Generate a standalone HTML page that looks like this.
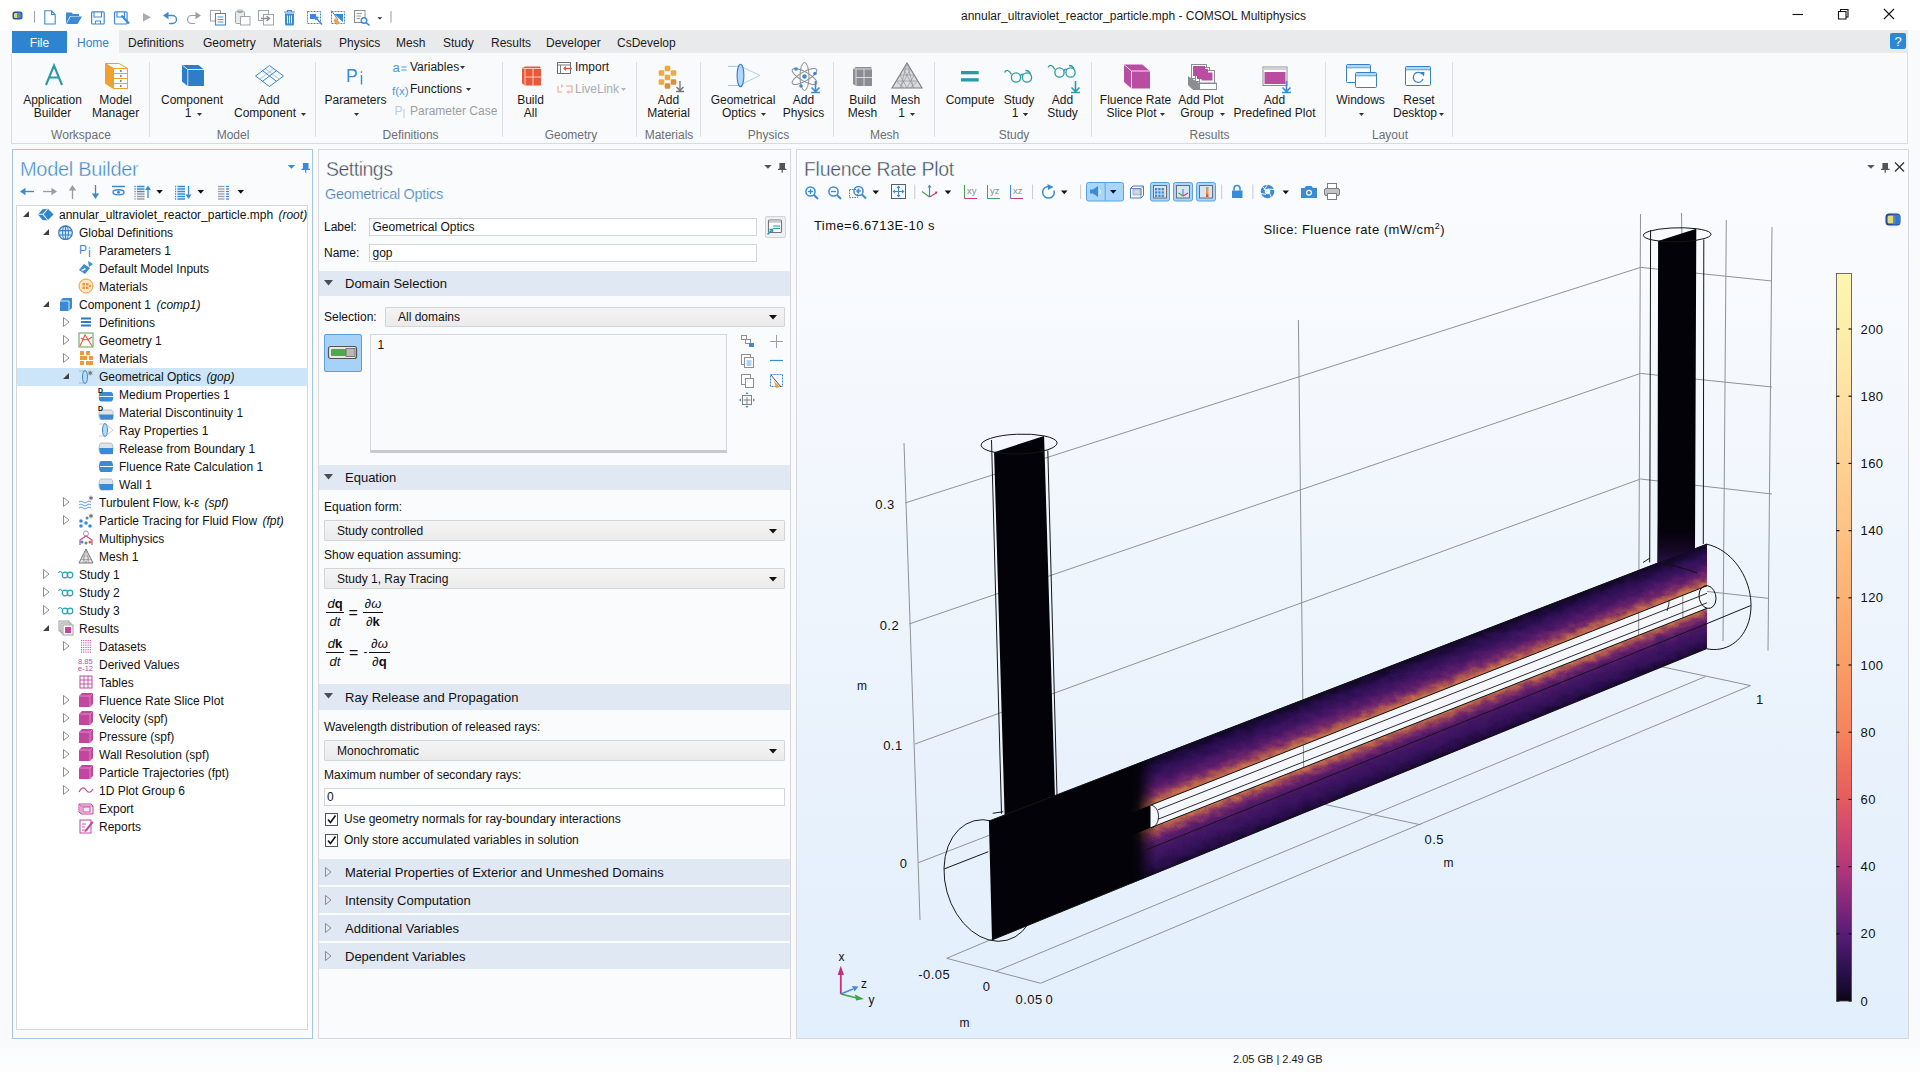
<!DOCTYPE html>
<html><head><meta charset="utf-8"><title>COMSOL</title>
<style>
html,body{margin:0;padding:0;}
body{width:1920px;height:1080px;overflow:hidden;position:relative;font-family:'Liberation Sans', sans-serif;background:#f9fafb;}
.t{position:absolute;white-space:nowrap;}
svg{display:block}
</style></head><body>
<div style="position:absolute;left:0px;top:0px;width:1920px;height:30px;background:#ffffff"></div><div style="position:absolute;left:0px;top:30px;width:1920px;height:1050px;background:linear-gradient(#f9fafc 0px,#f9fafc 1010px,#ffffff 1050px)"></div><div style="position:absolute;left:119px;top:30px;width:1789px;height:24px;background:#e9eaec"></div><div style="position:absolute;left:12px;top:31px;width:55px;height:22px;background:#2e84d1"></div><div class="t " style="left:-460.5px;width:1000px;text-align:center;top:36.8px;font-size:12px;line-height:12px;color:#ffffff;">File</div><div class="t " style="left:-407.0px;width:1000px;text-align:center;top:36.8px;font-size:12px;line-height:12px;color:#3a7fc0;">Home</div><div class="t " style="left:128.0px;top:36.8px;font-size:12px;line-height:12px;color:#1a1a1a;">Definitions</div><div class="t " style="left:203.0px;top:36.8px;font-size:12px;line-height:12px;color:#1a1a1a;">Geometry</div><div class="t " style="left:273.0px;top:36.8px;font-size:12px;line-height:12px;color:#1a1a1a;">Materials</div><div class="t " style="left:339.0px;top:36.8px;font-size:12px;line-height:12px;color:#1a1a1a;">Physics</div><div class="t " style="left:396.0px;top:36.8px;font-size:12px;line-height:12px;color:#1a1a1a;">Mesh</div><div class="t " style="left:443.0px;top:36.8px;font-size:12px;line-height:12px;color:#1a1a1a;">Study</div><div class="t " style="left:491.0px;top:36.8px;font-size:12px;line-height:12px;color:#1a1a1a;">Results</div><div class="t " style="left:546.0px;top:36.8px;font-size:12px;line-height:12px;color:#1a1a1a;">Developer</div><div class="t " style="left:617.0px;top:36.8px;font-size:12px;line-height:12px;color:#1a1a1a;">CsDevelop</div><div style="position:absolute;left:1890px;top:33px;width:16px;height:16px;background:#2d88d4;border-radius:2px"></div><div class="t " style="left:1398.0px;width:1000px;text-align:center;top:35.0px;font-size:13px;line-height:13px;color:#ffffff;">?</div><div class="t " style="left:961.0px;top:9.8px;font-size:12px;line-height:12px;color:#1a1a1a;">annular_ultraviolet_reactor_particle.mph - COMSOL Multiphysics</div><div style="position:absolute;left:11px;top:53px;width:1897px;height:91px;background:#f9fafc;border:1px solid #d9dbde;border-top:none;box-sizing:border-box"></div><div style="position:absolute;left:149px;top:62px;width:1px;height:75px;background:#dcdee1"></div><div style="position:absolute;left:315px;top:62px;width:1px;height:75px;background:#dcdee1"></div><div style="position:absolute;left:502px;top:62px;width:1px;height:75px;background:#dcdee1"></div><div style="position:absolute;left:636px;top:62px;width:1px;height:75px;background:#dcdee1"></div><div style="position:absolute;left:700px;top:62px;width:1px;height:75px;background:#dcdee1"></div><div style="position:absolute;left:833px;top:62px;width:1px;height:75px;background:#dcdee1"></div><div style="position:absolute;left:934px;top:62px;width:1px;height:75px;background:#dcdee1"></div><div style="position:absolute;left:1091px;top:62px;width:1px;height:75px;background:#dcdee1"></div><div style="position:absolute;left:1325px;top:62px;width:1px;height:75px;background:#dcdee1"></div><div style="position:absolute;left:1452px;top:62px;width:1px;height:75px;background:#dcdee1"></div><div class="t " style="left:-447.5px;width:1000px;text-align:center;top:94.3px;font-size:12px;line-height:12px;color:#1a1a1a;">Application</div><div class="t " style="left:-447.5px;width:1000px;text-align:center;top:106.5px;font-size:12px;line-height:12px;color:#1a1a1a;">Builder</div><div class="t " style="left:-384.4px;width:1000px;text-align:center;top:94.3px;font-size:12px;line-height:12px;color:#1a1a1a;">Model</div><div class="t " style="left:-384.4px;width:1000px;text-align:center;top:106.5px;font-size:12px;line-height:12px;color:#1a1a1a;">Manager</div><div class="t " style="left:-308.0px;width:1000px;text-align:center;top:94.3px;font-size:12px;line-height:12px;color:#1a1a1a;">Component</div><div class="t " style="left:-312.0px;width:1000px;text-align:center;top:106.5px;font-size:12px;line-height:12px;color:#1a1a1a;">1</div><div class="t " style="left:-231.0px;width:1000px;text-align:center;top:94.3px;font-size:12px;line-height:12px;color:#1a1a1a;">Add</div><div class="t " style="left:-235.0px;width:1000px;text-align:center;top:106.5px;font-size:12px;line-height:12px;color:#1a1a1a;">Component</div><div class="t " style="left:30.5px;width:1000px;text-align:center;top:94.3px;font-size:12px;line-height:12px;color:#1a1a1a;">Build</div><div class="t " style="left:30.5px;width:1000px;text-align:center;top:106.5px;font-size:12px;line-height:12px;color:#1a1a1a;">All</div><div class="t " style="left:168.5px;width:1000px;text-align:center;top:94.3px;font-size:12px;line-height:12px;color:#1a1a1a;">Add</div><div class="t " style="left:168.5px;width:1000px;text-align:center;top:106.5px;font-size:12px;line-height:12px;color:#1a1a1a;">Material</div><div class="t " style="left:243.0px;width:1000px;text-align:center;top:94.3px;font-size:12px;line-height:12px;color:#1a1a1a;">Geometrical</div><div class="t " style="left:239.0px;width:1000px;text-align:center;top:106.5px;font-size:12px;line-height:12px;color:#1a1a1a;">Optics</div><div class="t " style="left:303.5px;width:1000px;text-align:center;top:94.3px;font-size:12px;line-height:12px;color:#1a1a1a;">Add</div><div class="t " style="left:303.5px;width:1000px;text-align:center;top:106.5px;font-size:12px;line-height:12px;color:#1a1a1a;">Physics</div><div class="t " style="left:362.5px;width:1000px;text-align:center;top:94.3px;font-size:12px;line-height:12px;color:#1a1a1a;">Build</div><div class="t " style="left:362.5px;width:1000px;text-align:center;top:106.5px;font-size:12px;line-height:12px;color:#1a1a1a;">Mesh</div><div class="t " style="left:405.5px;width:1000px;text-align:center;top:94.3px;font-size:12px;line-height:12px;color:#1a1a1a;">Mesh</div><div class="t " style="left:401.5px;width:1000px;text-align:center;top:106.5px;font-size:12px;line-height:12px;color:#1a1a1a;">1</div><div class="t " style="left:519.0px;width:1000px;text-align:center;top:94.3px;font-size:12px;line-height:12px;color:#1a1a1a;">Study</div><div class="t " style="left:515.0px;width:1000px;text-align:center;top:106.5px;font-size:12px;line-height:12px;color:#1a1a1a;">1</div><div class="t " style="left:562.5px;width:1000px;text-align:center;top:94.3px;font-size:12px;line-height:12px;color:#1a1a1a;">Add</div><div class="t " style="left:562.5px;width:1000px;text-align:center;top:106.5px;font-size:12px;line-height:12px;color:#1a1a1a;">Study</div><div class="t " style="left:635.5px;width:1000px;text-align:center;top:94.3px;font-size:12px;line-height:12px;color:#1a1a1a;">Fluence Rate</div><div class="t " style="left:631.5px;width:1000px;text-align:center;top:106.5px;font-size:12px;line-height:12px;color:#1a1a1a;">Slice Plot</div><div class="t " style="left:701.0px;width:1000px;text-align:center;top:94.3px;font-size:12px;line-height:12px;color:#1a1a1a;">Add Plot</div><div class="t " style="left:697.0px;width:1000px;text-align:center;top:106.5px;font-size:12px;line-height:12px;color:#1a1a1a;">Group</div><div class="t " style="left:774.5px;width:1000px;text-align:center;top:94.3px;font-size:12px;line-height:12px;color:#1a1a1a;">Add</div><div class="t " style="left:774.5px;width:1000px;text-align:center;top:106.5px;font-size:12px;line-height:12px;color:#1a1a1a;">Predefined Plot</div><div class="t " style="left:919.0px;width:1000px;text-align:center;top:94.3px;font-size:12px;line-height:12px;color:#1a1a1a;">Reset</div><div class="t " style="left:915.0px;width:1000px;text-align:center;top:106.5px;font-size:12px;line-height:12px;color:#1a1a1a;">Desktop</div><div class="t " style="left:-144.5px;width:1000px;text-align:center;top:94.3px;font-size:12px;line-height:12px;color:#1a1a1a;">Parameters</div><div class="t " style="left:470.0px;width:1000px;text-align:center;top:94.3px;font-size:12px;line-height:12px;color:#1a1a1a;">Compute</div><div class="t " style="left:860.5px;width:1000px;text-align:center;top:94.3px;font-size:12px;line-height:12px;color:#1a1a1a;">Windows</div><svg style="position:absolute;left:196.5px;top:112.5px" width="5" height="3"><path d="M0 0H5L2.5 3Z" fill="#333"/></svg><svg style="position:absolute;left:301px;top:112.5px" width="5" height="3"><path d="M0 0H5L2.5 3Z" fill="#333"/></svg><svg style="position:absolute;left:761px;top:112.5px" width="5" height="3"><path d="M0 0H5L2.5 3Z" fill="#333"/></svg><svg style="position:absolute;left:909.5px;top:112.5px" width="5" height="3"><path d="M0 0H5L2.5 3Z" fill="#333"/></svg><svg style="position:absolute;left:1023px;top:112.5px" width="5" height="3"><path d="M0 0H5L2.5 3Z" fill="#333"/></svg><svg style="position:absolute;left:1160px;top:112.5px" width="5" height="3"><path d="M0 0H5L2.5 3Z" fill="#333"/></svg><svg style="position:absolute;left:1219.5px;top:112.5px" width="5" height="3"><path d="M0 0H5L2.5 3Z" fill="#333"/></svg><svg style="position:absolute;left:1439px;top:112.5px" width="5" height="3"><path d="M0 0H5L2.5 3Z" fill="#333"/></svg><svg style="position:absolute;left:354px;top:112.5px" width="5" height="3"><path d="M0 0H5L2.5 3Z" fill="#333"/></svg><svg style="position:absolute;left:1359px;top:112.5px" width="5" height="3"><path d="M0 0H5L2.5 3Z" fill="#333"/></svg><svg style="position:absolute;left:1022.5px;top:112.5px" width="5" height="3"><path d="M0 0H5L2.5 3Z" fill="#333"/></svg><div class="t " style="left:-419.0px;width:1000px;text-align:center;top:128.8px;font-size:12px;line-height:12px;color:#6b6f74;">Workspace</div><div class="t " style="left:-267.0px;width:1000px;text-align:center;top:128.8px;font-size:12px;line-height:12px;color:#6b6f74;">Model</div><div class="t " style="left:-89.4px;width:1000px;text-align:center;top:128.8px;font-size:12px;line-height:12px;color:#6b6f74;">Definitions</div><div class="t " style="left:71.0px;width:1000px;text-align:center;top:128.8px;font-size:12px;line-height:12px;color:#6b6f74;">Geometry</div><div class="t " style="left:169.0px;width:1000px;text-align:center;top:128.8px;font-size:12px;line-height:12px;color:#6b6f74;">Materials</div><div class="t " style="left:268.5px;width:1000px;text-align:center;top:128.8px;font-size:12px;line-height:12px;color:#6b6f74;">Physics</div><div class="t " style="left:384.6px;width:1000px;text-align:center;top:128.8px;font-size:12px;line-height:12px;color:#6b6f74;">Mesh</div><div class="t " style="left:514.0px;width:1000px;text-align:center;top:128.8px;font-size:12px;line-height:12px;color:#6b6f74;">Study</div><div class="t " style="left:709.5px;width:1000px;text-align:center;top:128.8px;font-size:12px;line-height:12px;color:#6b6f74;">Results</div><div class="t " style="left:890.0px;width:1000px;text-align:center;top:128.8px;font-size:12px;line-height:12px;color:#6b6f74;">Layout</div><div class="t " style="left:410.0px;top:60.8px;font-size:12px;line-height:12px;color:#1a1a1a;">Variables</div><svg style="position:absolute;left:460px;top:66px" width="5" height="3"><path d="M0 0H5L2.5 3Z" fill="#333"/></svg><div class="t " style="left:410.0px;top:82.8px;font-size:12px;line-height:12px;color:#1a1a1a;">Functions</div><svg style="position:absolute;left:466px;top:88px" width="5" height="3"><path d="M0 0H5L2.5 3Z" fill="#333"/></svg><div class="t " style="left:410.0px;top:104.8px;font-size:12px;line-height:12px;color:#9a9ea3;">Parameter Case</div><div class="t " style="left:575.0px;top:60.8px;font-size:12px;line-height:12px;color:#1a1a1a;">Import</div><div class="t " style="left:575.0px;top:82.8px;font-size:12px;line-height:12px;color:#a8acb0;">LiveLink</div><svg style="position:absolute;left:621px;top:88px" width="5" height="3"><path d="M0 0H5L2.5 3Z" fill="#b0b4b8"/></svg><svg style="position:absolute;left:1786px;top:4px" width="120" height="22" viewBox="1786 4 120 22"><path d="M1792.5 14.5H1803" stroke="#111" stroke-width="1.1"/><path d="M1838.5 11.5h7.5v7.5h-7.5z M1840.5 11.5v-2h7.5v7.5h-2" fill="none" stroke="#111" stroke-width="1.1"/><path d="M1884 9L1894 19M1894 9L1884 19" stroke="#111" stroke-width="1.1"/></svg><svg style="position:absolute;left:0;top:0" width="1460" height="150" viewBox="0 0 1460 150"><rect x="12.5" y="11.5" width="10" height="8" rx="2.5" fill="#1f4fa8"/><rect x="14" y="13" width="6.5" height="5" rx="1.2" fill="#e8d860"/><rect x="17" y="12.5" width="5" height="6" rx="1.5" fill="#3a78d0" opacity="0.8"/><path d="M34.5 11V22.5" stroke="#9a9da2" stroke-width="1"/><path d="M44.8 10.8H51.5L55.2 14.5V24H44.8Z M51.5 10.8V14.5H55.2" fill="none" stroke="#3a8ad6" stroke-width="1.1"/><path d="M66 12.5H71.5L73 14H79V16H70L66 23.8Z" fill="#3a8ad6"/><path d="M70.5 16.5H82L77.5 24H66.5Z" fill="#3a8ad6"/><rect x="91.6" y="11.8" width="12.6" height="12.2" rx="1" fill="none" stroke="#3a8ad6" stroke-width="1.2"/><path d="M94 12V17H101.5V12" fill="none" stroke="#3a8ad6" stroke-width="1.1"/><path d="M95.5 24V21H100.5V24" fill="none" stroke="#3a8ad6" stroke-width="1"/><rect x="114.5" y="11.8" width="12.6" height="12.2" rx="1" fill="none" stroke="#3a8ad6" stroke-width="1.2"/><path d="M117 12V17H124.5V12" fill="none" stroke="#3a8ad6" stroke-width="1.1"/><path d="M121.5 15.5L129 23.5" stroke="#3a8ad6" stroke-width="2.2"/><path d="M143 13L151 17.2L143 21.4Z" fill="#a8abb0"/><path d="M165 15.5H172.5A4 4 0 0 1 172.5 23.5H169" fill="none" stroke="#3a8ad6" stroke-width="1.4"/><path d="M163 15.5L168.5 11.8V19.2Z" fill="#3a8ad6"/><path d="M199 15.5H191.5A4 4 0 0 0 191.5 23.5H195" fill="none" stroke="#9a9da2" stroke-width="1.2"/><path d="M201 15.5L195.5 11.8V19.2Z" fill="#9a9da2"/><rect x="210.5" y="10.5" width="10" height="10.5" fill="#fff" stroke="#a0a3a8" stroke-width="1"/><rect x="215.5" y="13.5" width="10" height="11.5" fill="#fff" stroke="#3a8ad6" stroke-width="1.1"/><path d="M217.5 17H223.5M217.5 19.5H223.5M217.5 22H223.5" stroke="#3a8ad6" stroke-width="0.9"/><rect x="235.5" y="11.5" width="9" height="12" rx="1" fill="#e8e9eb" stroke="#a0a3a8" stroke-width="1"/><rect x="240.5" y="16.5" width="9.5" height="8.5" fill="#fff" stroke="#a0a3a8" stroke-width="1"/><rect x="237.5" y="10" width="5" height="2.5" rx="1" fill="none" stroke="#a0a3a8" stroke-width="1"/><rect x="258.5" y="10.5" width="10" height="10" fill="#fff" stroke="#a0a3a8" stroke-width="1"/><rect x="263.5" y="14.5" width="10" height="10.5" fill="#fff" stroke="#a0a3a8" stroke-width="1"/><path d="M261 18.5H269M266.5 16L269.5 18.5L266.5 21" fill="none" stroke="#8a8d91" stroke-width="1.3"/><path d="M284 12H295M287.5 11.5V10.5H291.5V11.5" fill="none" stroke="#3a8ad6" stroke-width="1.2"/><path d="M285 13.5H294V24A1.5 1.5 0 0 1 292.5 25.5H286.5A1.5 1.5 0 0 1 285 24Z" fill="#3a8ad6"/><path d="M287.5 15.5V23.5M289.5 15.5V23.5M291.5 15.5V23.5" stroke="#fff" stroke-width="0.9"/><rect x="307.5" y="11.5" width="13" height="12" fill="none" stroke="#3a8ad6" stroke-width="1" stroke-dasharray="2 1"/><rect x="310" y="14" width="6" height="5" fill="#3a8ad6"/><path d="M315 17L322 24.5" stroke="#3a8ad6" stroke-width="1.3"/><path d="M314 16L319 17L315.5 20.5Z" fill="#3a8ad6"/><rect x="331.5" y="11.5" width="13" height="12" fill="none" stroke="#3a8ad6" stroke-width="1" stroke-dasharray="2 1"/><path d="M334 14H343V22Z" fill="#3a8ad6"/><path d="M331.5 10.5L338 20" stroke="#7a7d82" stroke-width="1"/><path d="M335 18L340 22.5L337 25L333.5 21Z" fill="#f0a050"/><rect x="354.5" y="10.5" width="10.5" height="12" fill="#fff" stroke="#8a8d91" stroke-width="1"/><path d="M356.5 13.5H362M356.5 16H361M356.5 18.5H360" stroke="#8a8d91" stroke-width="0.9"/><circle cx="364" cy="20.5" r="2.8" fill="#fff" stroke="#3a8ad6" stroke-width="1.4"/><path d="M366 22.5L369.5 25.5" stroke="#3a8ad6" stroke-width="1.6"/><path d="M377.5 17.3H382.2L379.85 19.6Z" fill="#222"/><path d="M391 11V22.5" stroke="#9a9da2" stroke-width="1"/><path d="M46 85L54 65.5L62 85M49 77.5H59" fill="none" stroke="#2a9aa0" stroke-width="2.1"/><path d="M105.5 63.5L113.5 68.5V88.5L105.5 83.5Z" fill="#f0a030" stroke="#f0a030" stroke-width="1"/><path d="M105.5 63.5H119L127.5 68.5H113.5Z" fill="#fff" stroke="#f0a030" stroke-width="1"/><rect x="113.5" y="68.5" width="14" height="20" fill="#fff" stroke="#f0a030" stroke-width="1"/><path d="M113.5 73.5H127.5M113.5 78.5H127.5M113.5 83.5H127.5" stroke="#f0a030" stroke-width="1"/><rect x="120" y="70.2" width="1.6" height="1.6" fill="#666"/><rect x="120" y="75.2" width="1.6" height="1.6" fill="#666"/><rect x="120" y="80.2" width="1.6" height="1.6" fill="#666"/><rect x="120" y="85.2" width="1.6" height="1.6" fill="#666"/><path d="M182 65H198.5L204 69.5V86H187.5L182 81.5Z" fill="#2f7cc8"/><path d="M182.5 65.3L187.8 69.5H204M187.8 69.5V86" fill="none" stroke="#e8f4ff" stroke-width="0.9"/><g fill="none" stroke="#3a8ad6" stroke-width="1"><path d="M269.5 65.5L283.5 76L269.5 86.5L255.5 76Z"/><path d="M262.5 70.7L276.5 81.3M276.5 70.7L262.5 81.3"/><path d="M265 68.5L279 79M274 68.5L260 79" opacity="0.45"/></g><text x="346" y="81.5" font-family="Liberation Sans" font-size="17.5" fill="#3a8ad6">P</text><path d="M361.5 75V84.5" stroke="#3a8ad6" stroke-width="1.4"/><rect x="360.8" y="71.3" width="1.4" height="1.6" fill="#3a8ad6"/><text x="392.5" y="72" font-family="Liberation Sans" font-size="13" fill="#4a98d8">a</text><path d="M401.5 67H406.5M401.5 70H406.5" stroke="#4a98d8" stroke-width="1.2"/><text x="392" y="94.5" font-family="Liberation Sans" font-size="11.5" fill="#4a98d8">f(x)</text><text x="394.5" y="115" font-family="Liberation Sans" font-size="12" fill="#b8cde0">P</text><path d="M404 109V118" stroke="#b8cde0" stroke-width="1"/><path d="M522 68L525 66.5H540L541 68.5V85.5H525L522 83.5Z" fill="#e8583a"/><path d="M525 68.5H541M525 68.5V85.5M533 68.5V85.5M525 77H541M522 68L525 68.5" fill="none" stroke="#ffd8c8" stroke-width="0.9"/><rect x="557.5" y="62.5" width="13" height="11" fill="#fff" stroke="#6a6d72" stroke-width="1"/><path d="M557.5 65H570.5M560.5 65V73.5" stroke="#6a6d72" stroke-width="0.9"/><path d="M564 68.5H572" stroke="#e05a3a" stroke-width="1.4"/><path d="M563 68.5L566 66V71Z" fill="#e05a3a"/><path d="M558 86V92H562M566 86H572V92H568" fill="none" stroke="#f0c0b0" stroke-width="1.6"/><path d="M561 84L564 86L561 88ZM569 90L566 92L569 94Z" fill="#f0c0b0"/><rect x="664.7" y="65.7" width="5.6" height="5.6" rx="1.3" fill="#f0a838"/><rect x="658.7" y="70.2" width="5.6" height="5.6" rx="1.3" fill="#f0a838"/><rect x="670.7" y="70.2" width="5.6" height="5.6" rx="1.3" fill="#f0a838"/><rect x="664.7" y="74.7" width="5.6" height="5.6" rx="1.3" fill="#f0a838"/><rect x="658.7" y="79.2" width="5.6" height="5.6" rx="1.3" fill="#f0a838"/><rect x="670.7" y="79.2" width="5.6" height="5.6" rx="1.3" fill="#d89030"/><rect x="664.7" y="83.2" width="5.6" height="5.6" rx="1.3" fill="#d89030"/><path d="M680 81V90M676.5 87L680 90.5L683.5 87M676 91.5H684" fill="none" stroke="#707378" stroke-width="1.3"/><path d="M728 66.3H740M728 85.5H740" stroke="#9cb8d8" stroke-width="0.9"/><path d="M741 66.5L760 75.5L741 84.5" fill="none" stroke="#a8c8e8" stroke-width="0.9"/><ellipse cx="740.5" cy="75.5" rx="3.4" ry="11.3" fill="#b0d8fa" stroke="#3a78cc" stroke-width="1.1"/><g fill="none" stroke="#8a8d91" stroke-width="1"><ellipse cx="804.5" cy="76.5" rx="4.5" ry="14"/><ellipse cx="804.5" cy="76.5" rx="4.5" ry="14" transform="rotate(60 804.5 76.5)"/><ellipse cx="804.5" cy="76.5" rx="4.5" ry="14" transform="rotate(-60 804.5 76.5)"/></g><circle cx="804.5" cy="76.5" r="2.2" fill="#3a8ad6"/><circle cx="796" cy="69" r="1.8" fill="#3a8ad6"/><circle cx="815" cy="73.5" r="1.8" fill="#3a8ad6"/><circle cx="801" cy="86" r="1.8" fill="#3a8ad6"/><path d="M815.5 81V91M811.5 87.5L815.5 91.5L819.5 87.5M811 92.5H820" fill="none" stroke="#3a8ad6" stroke-width="1.6"/><path d="M853 68.5L856 67H871L872 69V86H856L853 84Z" fill="#8a8d91"/><path d="M856 69H872M856 69V86M864 69V86M856 77.5H872M853 68.5L856 69" fill="none" stroke="#e0e2e5" stroke-width="0.9"/><path d="M907 63L922 88H892Z" fill="#d8dadd" stroke="#7a7d82" stroke-width="1.1"/><g stroke="#8a8d91" stroke-width="0.6" fill="none"><path d="M903.4 69H910.6M899.8 75H914.2M896.2 81H917.8M907 63L900.5 88M907 63L913.5 88M903.4 69L914 88M910.6 69L900 88M899.8 75L907 88M914.2 75L907 88M896.2 81L904 88M917.8 81L910 88"/></g><rect x="961" y="71" width="17.7" height="3.3" fill="#2a9aa8"/><rect x="961" y="78.2" width="17.7" height="3.3" fill="#2a9aa8"/><g fill="none" stroke="#2a9aa8" stroke-width="1.3"><path d="M1004.5 72.5Q1007.5 67.5 1011.5 74.5"/><circle cx="1016.0" cy="77.5" r="4.6"/><circle cx="1027.0" cy="77.5" r="4.6"/><path d="M1020.5 76.0Q1021.5 73.5 1023.5 74.5M1030.5 74.5Q1029.5 70.5 1025.5 70.5"/></g><g fill="none" stroke="#2a9aa8" stroke-width="1.3"><path d="M1048 67.5Q1051 62.5 1055 69.5"/><circle cx="1059.5" cy="72.5" r="4.6"/><circle cx="1070.5" cy="72.5" r="4.6"/><path d="M1064 71.0Q1065 68.5 1067 69.5M1074 69.5Q1073 65.5 1069 65.5"/></g><path d="M1075.5 81V91M1071.5 87.5L1075.5 91.5L1079.5 87.5M1071 92.5H1080" fill="none" stroke="#2a9aa8" stroke-width="1.6"/><path d="M1124 64.5H1142L1150 71V88.5H1131.5L1124 82Z" fill="#b84da2"/><path d="M1124.3 64.8L1131.5 71H1150M1131.5 71V88.5" fill="none" stroke="#fbe0f4" stroke-width="1"/><g fill="#fff" stroke="#8a8d91" stroke-width="1"><rect x="1191.5" y="64.5" width="15" height="14"/><rect x="1195.5" y="67.5" width="14" height="14"/><rect x="1199.5" y="70.5" width="15" height="14"/></g><rect x="1193" y="66" width="12" height="10" fill="#b84da2"/><rect x="1197" y="69" width="11" height="10" fill="#b84da2"/><rect x="1201.5" y="72.5" width="11" height="8" fill="#b84da2"/><path d="M1188.5 76.5V85L1193 89.5H1216.5V83H1199" fill="#8a8d91" stroke="#8a8d91"/><rect x="1199.5" y="83.5" width="17" height="6" fill="#fff" stroke="#8a8d91"/><rect x="1263" y="67" width="24" height="18.5" fill="#fff" stroke="#8a8d91" stroke-width="1"/><rect x="1263.5" y="67.5" width="23" height="2.5" fill="#d0d2d5"/><rect x="1264.5" y="72" width="21" height="12" fill="#b84da2"/><path d="M1286.5 81V91M1282.5 87.5L1286.5 91.5L1290.5 87.5M1282 92.5H1291" fill="none" stroke="#3a8ad6" stroke-width="1.6"/><rect x="1346.5" y="64.5" width="24" height="18" rx="1" fill="#fff" stroke="#3a7ec8" stroke-width="1"/><rect x="1347" y="65" width="23" height="2.5" fill="#a8dcfa"/><path d="M1346.5 67.8H1370.5" stroke="#3a7ec8" stroke-width="0.8"/><rect x="1355.5" y="72.5" width="21" height="15" rx="1" fill="#fff" stroke="#3a7ec8" stroke-width="1"/><rect x="1356" y="73" width="20" height="2.5" fill="#a8dcfa"/><path d="M1355.5 75.8H1376.5" stroke="#3a7ec8" stroke-width="0.8"/><rect x="1405.5" y="66.5" width="25" height="19" rx="1" fill="#fff" stroke="#3a7ec8" stroke-width="1"/><rect x="1406" y="67" width="24" height="2.5" fill="#a8dcfa"/><path d="M1405.5 69.8H1430.5" stroke="#3a7ec8" stroke-width="0.8"/><path d="M1422 74A5 5 0 1 0 1423 79" fill="none" stroke="#3a7ec8" stroke-width="1.2"/><path d="M1420 72L1424.5 72L1424 76.5Z" fill="#3a7ec8"/></svg><div style="position:absolute;left:12px;top:149px;width:301px;height:890px;background:#f9fbfd;border:1px solid #a4c6e2;box-sizing:border-box"></div><div style="position:absolute;left:16px;top:205px;width:292px;height:825px;background:#ffffff;border:1px solid #d6d8db;box-sizing:border-box"></div><div class="t " style="left:20.0px;top:159.1px;font-size:20px;line-height:20px;color:#3d87c9;letter-spacing:-0.3px;-webkit-text-stroke:0.4px #f9fbfd">Model Builder</div><div style="position:absolute;left:318px;top:149px;width:473px;height:890px;background:#fafbfd;border:1px solid #d6d8db;box-sizing:border-box"></div><div class="t " style="left:326.0px;top:159.5px;font-size:19.5px;line-height:19.5px;color:#3b4b5e;letter-spacing:-0.5px;-webkit-text-stroke:0.4px #f9fafc">Settings</div><div style="position:absolute;left:796px;top:149px;width:1113px;height:890px;background:linear-gradient(#f9fbfd 0px,#f9fbfe 60px,#f3f7fd 300px,#e9f2fc 600px,#e2effc 888px);border:1px solid #d6d8db;box-sizing:border-box"></div><div class="t " style="left:804.0px;top:159.5px;font-size:19.5px;line-height:19.5px;color:#3b4b5e;letter-spacing:-0.3px;-webkit-text-stroke:0.4px #f8fafd">Fluence Rate Plot</div><div style="position:absolute;left:17px;top:368px;width:291px;height:18px;background:#cce5f8"></div><svg style="position:absolute;left:23px;top:211px" width="7" height="6"><path d="M6 0V6H0Z" fill="#404040"/></svg><div class="t " style="left:59.0px;top:208.6px;font-size:12px;line-height:12px;color:#111;">annular_ultraviolet_reactor_particle.mph <i style="padding-left:2px">(root)</i></div><svg style="position:absolute;left:37.5px;top:206.0px" width="16" height="16" viewBox="0 0 16 16"><path d="M0 8.4L4.5 3.2L10 2.8L15.5 8.6L9.5 14.6L4.5 14Z" fill="#2f86d0"/><path d="M0.5 8.3H5L9.6 3M5 8.3L10 14.5" fill="none" stroke="#e8f6ff" stroke-width="1.1"/></svg><svg style="position:absolute;left:43px;top:229px" width="7" height="6"><path d="M6 0V6H0Z" fill="#404040"/></svg><div class="t " style="left:79.0px;top:226.6px;font-size:12px;line-height:12px;color:#111;">Global Definitions</div><svg style="position:absolute;left:58.0px;top:224.0px" width="16" height="16" viewBox="0 0 16 16"><circle cx="7.5" cy="8.8" r="6.8" fill="#d4f0fc" stroke="#3a7fc8" stroke-width="1.3"/><ellipse cx="7.5" cy="8.8" rx="3" ry="6.8" fill="none" stroke="#3a7fc8" stroke-width="1.1"/><path d="M1 6.6H14M1 11H14M7.5 2V15.6" stroke="#3a7fc8" stroke-width="1.1"/></svg><div class="t " style="left:99.0px;top:244.6px;font-size:12px;line-height:12px;color:#111;">Parameters 1</div><svg style="position:absolute;left:78.0px;top:242.0px" width="16" height="16" viewBox="0 0 16 16"><text x="1" y="12" font-size="12" fill="#3a8ad6" font-family="Liberation Sans">P</text><path d="M11.5 8V15" stroke="#3aa0c8" stroke-width="1.3"/><circle cx="11.5" cy="6" r="0.8" fill="#3aa0c8"/></svg><div class="t " style="left:99.0px;top:262.6px;font-size:12px;line-height:12px;color:#111;">Default Model Inputs</div><svg style="position:absolute;left:78.0px;top:260.0px" width="16" height="16" viewBox="0 0 16 16"><path d="M6 4L12 8L7 14L1 10Z" fill="#3a8ad6"/><path d="M10 1L15 4L11 7Z" fill="#2a9ab8"/><path d="M3 10L7 8L8 9L5 11Z" fill="#fff"/></svg><div class="t " style="left:99.0px;top:280.6px;font-size:12px;line-height:12px;color:#111;">Materials</div><svg style="position:absolute;left:78.0px;top:278.0px" width="16" height="16" viewBox="0 0 16 16"><circle cx="8" cy="8" r="7" fill="#fde7c8" stroke="#ef9a3a" stroke-width="1"/><rect x="4.5" y="5" width="2.5" height="2.5" fill="#ef9a3a"/><rect x="8" y="5" width="2.5" height="2.5" fill="#ef9a3a"/><rect x="4.5" y="8.5" width="2.5" height="2.5" fill="#ef9a3a"/><rect x="8" y="8.5" width="2.5" height="2.5" fill="#ef9a3a"/><rect x="11" y="7" width="2" height="2" fill="#ef9a3a"/></svg><svg style="position:absolute;left:43px;top:301px" width="7" height="6"><path d="M6 0V6H0Z" fill="#404040"/></svg><div class="t " style="left:79.0px;top:298.6px;font-size:12px;line-height:12px;color:#111;">Component 1 <i style="padding-left:2px">(comp1)</i></div><svg style="position:absolute;left:58.0px;top:296.0px" width="16" height="16" viewBox="0 0 16 16"><path d="M2 5L5 2H14V12L11 15H2Z" fill="#3a8ad6"/><path d="M2 5H11V15" fill="none" stroke="#fff" stroke-width="0.8"/></svg><svg style="position:absolute;left:63px;top:317px" width="7" height="10"><path d="M0.5 0.5L6 5L0.5 9.5Z" fill="none" stroke="#8a8d91" stroke-width="1"/></svg><div class="t " style="left:99.0px;top:316.6px;font-size:12px;line-height:12px;color:#111;">Definitions</div><svg style="position:absolute;left:78.0px;top:314.0px" width="16" height="16" viewBox="0 0 16 16"><path d="M3 4.5H13M3 8H13M3 11.5H13" stroke="#2f78c4" stroke-width="2"/></svg><svg style="position:absolute;left:63px;top:335px" width="7" height="10"><path d="M0.5 0.5L6 5L0.5 9.5Z" fill="none" stroke="#8a8d91" stroke-width="1"/></svg><div class="t " style="left:99.0px;top:334.6px;font-size:12px;line-height:12px;color:#111;">Geometry 1</div><svg style="position:absolute;left:78.0px;top:332.0px" width="16" height="16" viewBox="0 0 16 16"><rect x="1" y="1" width="14" height="14" fill="#fff" stroke="#5aa050" stroke-width="1"/><path d="M2 14L7 3L14 14M3 6Q8 10 14 5" fill="none" stroke="#e05a4a" stroke-width="1.1"/></svg><svg style="position:absolute;left:63px;top:353px" width="7" height="10"><path d="M0.5 0.5L6 5L0.5 9.5Z" fill="none" stroke="#8a8d91" stroke-width="1"/></svg><div class="t " style="left:99.0px;top:352.6px;font-size:12px;line-height:12px;color:#111;">Materials</div><svg style="position:absolute;left:78.0px;top:350.0px" width="16" height="16" viewBox="0 0 16 16"><rect x="2" y="1" width="4" height="4" fill="#ef9a3a"/><rect x="8" y="1" width="4" height="4" fill="#ef9a3a"/><rect x="5" y="6" width="4" height="4" fill="#ef9a3a"/><rect x="11" y="6" width="4" height="4" fill="#ef9a3a"/><rect x="2" y="11" width="4" height="4" fill="#ef9a3a"/><rect x="8" y="11" width="4" height="4" fill="#ef9a3a"/><rect x="11" y="11" width="4" height="4" fill="#ef9a3a"/><rect x="2" y="6" width="4" height="4" fill="#ef9a3a"/></svg><svg style="position:absolute;left:63px;top:373px" width="7" height="6"><path d="M6 0V6H0Z" fill="#404040"/></svg><div class="t " style="left:99.0px;top:370.6px;font-size:12px;line-height:12px;color:#111;">Geometrical Optics <i style="padding-left:2px">(gop)</i></div><svg style="position:absolute;left:78.0px;top:368.0px" width="16" height="16" viewBox="0 0 16 16"><ellipse cx="7" cy="9" rx="2.5" ry="6.5" fill="#bcd9f2" stroke="#3a8ad6" stroke-width="1"/><path d="M1 3H7M1 15H7" stroke="#8aa" stroke-width="0.6"/><path d="M12 2L13 4L15 3L13.5 5L15 7L13 6L12 8L11.5 6L9.5 7L11 5L9.5 3L11.5 4Z" fill="#777"/></svg><div class="t " style="left:119.0px;top:388.6px;font-size:12px;line-height:12px;color:#111;">Medium Properties 1</div><svg style="position:absolute;left:98.0px;top:386.0px" width="16" height="16" viewBox="0 0 16 16"><path d="M3 6H13A2.2 4.8 0 0 1 13 15.6H3A2.2 4.8 0 0 1 3 6Z" fill="#3a8ad6"/><path d="M1.5 10.5H15" stroke="#fff" stroke-width="0.9"/><text x="0" y="6.5" font-size="7" font-weight="bold" fill="#111" font-family="Liberation Sans">D</text></svg><div class="t " style="left:119.0px;top:406.6px;font-size:12px;line-height:12px;color:#111;">Material Discontinuity 1</div><svg style="position:absolute;left:98.0px;top:404.0px" width="16" height="16" viewBox="0 0 16 16"><path d="M3 6H13A2.2 4.8 0 0 1 13 15.6H3A2.2 4.8 0 0 1 3 6Z" fill="#dfe3e8" stroke="#a0a8b0" stroke-width="0.7"/><path d="M1.2 10.5H15.2V15.6H3Q1.2 13.5 1.2 10.5Z" fill="#3a8ad6"/><text x="0" y="6.5" font-size="7" font-weight="bold" fill="#111" font-family="Liberation Sans">D</text></svg><div class="t " style="left:119.0px;top:424.6px;font-size:12px;line-height:12px;color:#111;">Ray Properties 1</div><svg style="position:absolute;left:98.0px;top:422.0px" width="16" height="16" viewBox="0 0 16 16"><ellipse cx="7" cy="8" rx="2.5" ry="6.5" fill="#bcd9f2" stroke="#3a8ad6" stroke-width="1"/><path d="M9 3L15 8L9 13" fill="none" stroke="#9cc" stroke-width="0.8"/><path d="M1 2H7M1 14H7" stroke="#aaa" stroke-width="0.6"/></svg><div class="t " style="left:119.0px;top:442.6px;font-size:12px;line-height:12px;color:#111;">Release from Boundary 1</div><svg style="position:absolute;left:98.0px;top:440.0px" width="16" height="16" viewBox="0 0 16 16"><path d="M3 3H13A2 5.5 0 0 1 13 14H3A2 5.5 0 0 1 3 3Z" fill="#dfe3e8" stroke="#a0a8b0" stroke-width="0.7"/><path d="M1.2 8H15V14H3Q1.2 12 1.2 8Z" fill="#3a8ad6"/></svg><div class="t " style="left:119.0px;top:460.6px;font-size:12px;line-height:12px;color:#111;">Fluence Rate Calculation 1</div><svg style="position:absolute;left:98.0px;top:458.0px" width="16" height="16" viewBox="0 0 16 16"><path d="M3 3H13A2 5.5 0 0 1 13 14H3A2 5.5 0 0 1 3 3Z" fill="#3a8ad6"/><path d="M2 8.5H15" stroke="#fff" stroke-width="1"/></svg><div class="t " style="left:119.0px;top:478.6px;font-size:12px;line-height:12px;color:#111;">Wall 1</div><svg style="position:absolute;left:98.0px;top:476.0px" width="16" height="16" viewBox="0 0 16 16"><path d="M3 3H13A2 5.5 0 0 1 13 14H3A2 5.5 0 0 1 3 3Z" fill="#dfe3e8" stroke="#a0a8b0" stroke-width="0.7"/><path d="M1.2 8H15V14H3Q1.2 12 1.2 8Z" fill="#3a8ad6"/></svg><svg style="position:absolute;left:63px;top:497px" width="7" height="10"><path d="M0.5 0.5L6 5L0.5 9.5Z" fill="none" stroke="#8a8d91" stroke-width="1"/></svg><div class="t " style="left:99.0px;top:496.6px;font-size:12px;line-height:12px;color:#111;">Turbulent Flow, k-ε <i style="padding-left:2px">(spf)</i></div><svg style="position:absolute;left:78.0px;top:494.0px" width="16" height="16" viewBox="0 0 16 16"><path d="M1 8Q3 6 5 8T9 8T13 8M1 11Q3 9 5 11T9 11T13 11M1 14Q3 12 5 14T9 14T13 14" fill="none" stroke="#5a9ad6" stroke-width="1"/><path d="M13 1L13.7 3L15.5 2.5L14.3 4L15.5 5.5L13.7 5L13 7L12.3 5L10.5 5.5L11.7 4L10.5 2.5L12.3 3Z" fill="#777"/></svg><svg style="position:absolute;left:63px;top:515px" width="7" height="10"><path d="M0.5 0.5L6 5L0.5 9.5Z" fill="none" stroke="#8a8d91" stroke-width="1"/></svg><div class="t " style="left:99.0px;top:514.6px;font-size:12px;line-height:12px;color:#111;">Particle Tracing for Fluid Flow <i style="padding-left:2px">(fpt)</i></div><svg style="position:absolute;left:78.0px;top:512.0px" width="16" height="16" viewBox="0 0 16 16"><circle cx="3" cy="9" r="1.8" fill="#3a8ad6"/><circle cx="3" cy="14" r="1.8" fill="#3a8ad6"/><circle cx="8" cy="11" r="1.8" fill="#3a8ad6"/><circle cx="12" cy="14" r="1.8" fill="#3a8ad6"/><circle cx="9" cy="6" r="1.5" fill="#3a8ad6"/><path d="M13 1L13.7 3L15.5 2.5L14.3 4L15.5 5.5L13.7 5L13 7L12.3 5L10.5 5.5L11.7 4L10.5 2.5L12.3 3Z" fill="#777"/></svg><div class="t " style="left:99.0px;top:532.6px;font-size:12px;line-height:12px;color:#111;">Multiphysics</div><svg style="position:absolute;left:78.0px;top:530.0px" width="16" height="16" viewBox="0 0 16 16"><path d="M2 15V10L8 6L14 10V15" fill="none" stroke="#c24a8a" stroke-width="1.2"/><circle cx="4" cy="12" r="1.5" fill="#3a8ad6"/><circle cx="8" cy="13" r="1.5" fill="#4aa050"/><circle cx="12" cy="12" r="1.5" fill="#e05a4a"/><circle cx="8" cy="3.5" r="2.5" fill="none" stroke="#888" stroke-width="0.8"/></svg><div class="t " style="left:99.0px;top:550.6px;font-size:12px;line-height:12px;color:#111;">Mesh 1</div><svg style="position:absolute;left:78.0px;top:548.0px" width="16" height="16" viewBox="0 0 16 16"><path d="M8 1L15 15H1Z" fill="#e8e8e8" stroke="#777" stroke-width="1"/><path d="M4.5 8H11.5M3 11.5H13M8 1L5 15M8 1L11 15M4.5 8L8 15L11.5 8" fill="none" stroke="#888" stroke-width="0.6"/></svg><svg style="position:absolute;left:43px;top:569px" width="7" height="10"><path d="M0.5 0.5L6 5L0.5 9.5Z" fill="none" stroke="#8a8d91" stroke-width="1"/></svg><div class="t " style="left:79.0px;top:568.6px;font-size:12px;line-height:12px;color:#111;">Study 1</div><svg style="position:absolute;left:58.0px;top:566.0px" width="16" height="16" viewBox="0 0 16 16"><path d="M0.5 7Q2 4 4 7" fill="none" stroke="#2aa0b8" stroke-width="1.2"/><circle cx="7" cy="9" r="2.8" fill="none" stroke="#2aa0b8" stroke-width="1.2"/><circle cx="12" cy="9" r="2.8" fill="none" stroke="#2aa0b8" stroke-width="1.2"/></svg><svg style="position:absolute;left:43px;top:587px" width="7" height="10"><path d="M0.5 0.5L6 5L0.5 9.5Z" fill="none" stroke="#8a8d91" stroke-width="1"/></svg><div class="t " style="left:79.0px;top:586.6px;font-size:12px;line-height:12px;color:#111;">Study 2</div><svg style="position:absolute;left:58.0px;top:584.0px" width="16" height="16" viewBox="0 0 16 16"><path d="M0.5 7Q2 4 4 7" fill="none" stroke="#2aa0b8" stroke-width="1.2"/><circle cx="7" cy="9" r="2.8" fill="none" stroke="#2aa0b8" stroke-width="1.2"/><circle cx="12" cy="9" r="2.8" fill="none" stroke="#2aa0b8" stroke-width="1.2"/></svg><svg style="position:absolute;left:43px;top:605px" width="7" height="10"><path d="M0.5 0.5L6 5L0.5 9.5Z" fill="none" stroke="#8a8d91" stroke-width="1"/></svg><div class="t " style="left:79.0px;top:604.6px;font-size:12px;line-height:12px;color:#111;">Study 3</div><svg style="position:absolute;left:58.0px;top:602.0px" width="16" height="16" viewBox="0 0 16 16"><path d="M0.5 7Q2 4 4 7" fill="none" stroke="#2aa0b8" stroke-width="1.2"/><circle cx="7" cy="9" r="2.8" fill="none" stroke="#2aa0b8" stroke-width="1.2"/><circle cx="12" cy="9" r="2.8" fill="none" stroke="#2aa0b8" stroke-width="1.2"/></svg><svg style="position:absolute;left:43px;top:625px" width="7" height="6"><path d="M6 0V6H0Z" fill="#404040"/></svg><div class="t " style="left:79.0px;top:622.6px;font-size:12px;line-height:12px;color:#111;">Results</div><svg style="position:absolute;left:58.0px;top:620.0px" width="16" height="16" viewBox="0 0 16 16"><rect x="1" y="1" width="10" height="10" fill="#f0f0f0" stroke="#888" stroke-width="0.8"/><rect x="3" y="3" width="10" height="10" fill="#f0f0f0" stroke="#888" stroke-width="0.8"/><rect x="5" y="5" width="10" height="10" fill="#fff" stroke="#888" stroke-width="0.8"/><rect x="7" y="7" width="6" height="6" fill="#c2469e"/></svg><svg style="position:absolute;left:63px;top:641px" width="7" height="10"><path d="M0.5 0.5L6 5L0.5 9.5Z" fill="none" stroke="#8a8d91" stroke-width="1"/></svg><div class="t " style="left:99.0px;top:640.6px;font-size:12px;line-height:12px;color:#111;">Datasets</div><svg style="position:absolute;left:78.0px;top:638.0px" width="16" height="16" viewBox="0 0 16 16"><rect x="3.0" y="2.0" width="1.1" height="1.1" fill="#c2469e"/><rect x="5.2" y="2.0" width="1.1" height="1.1" fill="#c2469e"/><rect x="7.4" y="2.0" width="1.1" height="1.1" fill="#c2469e"/><rect x="9.6" y="2.0" width="1.1" height="1.1" fill="#c2469e"/><rect x="11.8" y="2.0" width="1.1" height="1.1" fill="#c2469e"/><rect x="3.0" y="4.3" width="1.1" height="1.1" fill="#c2469e"/><rect x="5.2" y="4.3" width="1.1" height="1.1" fill="#c2469e"/><rect x="7.4" y="4.3" width="1.1" height="1.1" fill="#c2469e"/><rect x="9.6" y="4.3" width="1.1" height="1.1" fill="#c2469e"/><rect x="11.8" y="4.3" width="1.1" height="1.1" fill="#c2469e"/><rect x="3.0" y="6.6" width="1.1" height="1.1" fill="#c2469e"/><rect x="5.2" y="6.6" width="1.1" height="1.1" fill="#c2469e"/><rect x="7.4" y="6.6" width="1.1" height="1.1" fill="#c2469e"/><rect x="9.6" y="6.6" width="1.1" height="1.1" fill="#c2469e"/><rect x="11.8" y="6.6" width="1.1" height="1.1" fill="#c2469e"/><rect x="3.0" y="8.9" width="1.1" height="1.1" fill="#c2469e"/><rect x="5.2" y="8.9" width="1.1" height="1.1" fill="#c2469e"/><rect x="7.4" y="8.9" width="1.1" height="1.1" fill="#c2469e"/><rect x="9.6" y="8.9" width="1.1" height="1.1" fill="#c2469e"/><rect x="11.8" y="8.9" width="1.1" height="1.1" fill="#c2469e"/><rect x="3.0" y="11.2" width="1.1" height="1.1" fill="#c2469e"/><rect x="5.2" y="11.2" width="1.1" height="1.1" fill="#c2469e"/><rect x="7.4" y="11.2" width="1.1" height="1.1" fill="#c2469e"/><rect x="9.6" y="11.2" width="1.1" height="1.1" fill="#c2469e"/><rect x="11.8" y="11.2" width="1.1" height="1.1" fill="#c2469e"/><rect x="3.0" y="13.5" width="1.1" height="1.1" fill="#c2469e"/><rect x="5.2" y="13.5" width="1.1" height="1.1" fill="#c2469e"/><rect x="7.4" y="13.5" width="1.1" height="1.1" fill="#c2469e"/><rect x="9.6" y="13.5" width="1.1" height="1.1" fill="#c2469e"/><rect x="11.8" y="13.5" width="1.1" height="1.1" fill="#c2469e"/></svg><div class="t " style="left:99.0px;top:658.6px;font-size:12px;line-height:12px;color:#111;">Derived Values</div><svg style="position:absolute;left:78.0px;top:656.0px" width="16" height="16" viewBox="0 0 16 16"><text x="0" y="7.5" font-size="7.5" fill="#c2469e" font-family="Liberation Sans">8.85</text><text x="0" y="14.5" font-size="7.5" fill="#c2469e" font-family="Liberation Sans">e-12</text></svg><div class="t " style="left:99.0px;top:676.6px;font-size:12px;line-height:12px;color:#111;">Tables</div><svg style="position:absolute;left:78.0px;top:674.0px" width="16" height="16" viewBox="0 0 16 16"><rect x="2" y="2" width="12" height="12" fill="none" stroke="#c2469e" stroke-width="1"/><path d="M2 6H14M2 10H14M6 2V14M10 2V14" stroke="#c2469e" stroke-width="0.9"/></svg><svg style="position:absolute;left:63px;top:695px" width="7" height="10"><path d="M0.5 0.5L6 5L0.5 9.5Z" fill="none" stroke="#8a8d91" stroke-width="1"/></svg><div class="t " style="left:99.0px;top:694.6px;font-size:12px;line-height:12px;color:#111;">Fluence Rate Slice Plot</div><svg style="position:absolute;left:78.0px;top:692.0px" width="16" height="16" viewBox="0 0 16 16"><path d="M1 4L4 1H15V12L12 15H1Z" fill="#c2469e"/><path d="M1 4H12V15M12 4L15 1" fill="none" stroke="#e8a8d8" stroke-width="0.7"/></svg><svg style="position:absolute;left:63px;top:713px" width="7" height="10"><path d="M0.5 0.5L6 5L0.5 9.5Z" fill="none" stroke="#8a8d91" stroke-width="1"/></svg><div class="t " style="left:99.0px;top:712.6px;font-size:12px;line-height:12px;color:#111;">Velocity (spf)</div><svg style="position:absolute;left:78.0px;top:710.0px" width="16" height="16" viewBox="0 0 16 16"><path d="M1 4L4 1H15V12L12 15H1Z" fill="#c2469e"/><path d="M1 4H12V15M12 4L15 1" fill="none" stroke="#e8a8d8" stroke-width="0.7"/></svg><svg style="position:absolute;left:63px;top:731px" width="7" height="10"><path d="M0.5 0.5L6 5L0.5 9.5Z" fill="none" stroke="#8a8d91" stroke-width="1"/></svg><div class="t " style="left:99.0px;top:730.6px;font-size:12px;line-height:12px;color:#111;">Pressure (spf)</div><svg style="position:absolute;left:78.0px;top:728.0px" width="16" height="16" viewBox="0 0 16 16"><path d="M1 4L4 1H15V12L12 15H1Z" fill="#c2469e"/><path d="M1 4H12V15M12 4L15 1" fill="none" stroke="#e8a8d8" stroke-width="0.7"/></svg><svg style="position:absolute;left:63px;top:749px" width="7" height="10"><path d="M0.5 0.5L6 5L0.5 9.5Z" fill="none" stroke="#8a8d91" stroke-width="1"/></svg><div class="t " style="left:99.0px;top:748.6px;font-size:12px;line-height:12px;color:#111;">Wall Resolution (spf)</div><svg style="position:absolute;left:78.0px;top:746.0px" width="16" height="16" viewBox="0 0 16 16"><path d="M1 4L4 1H15V12L12 15H1Z" fill="#c2469e"/><path d="M1 4H12V15M12 4L15 1" fill="none" stroke="#e8a8d8" stroke-width="0.7"/></svg><svg style="position:absolute;left:63px;top:767px" width="7" height="10"><path d="M0.5 0.5L6 5L0.5 9.5Z" fill="none" stroke="#8a8d91" stroke-width="1"/></svg><div class="t " style="left:99.0px;top:766.6px;font-size:12px;line-height:12px;color:#111;">Particle Trajectories (fpt)</div><svg style="position:absolute;left:78.0px;top:764.0px" width="16" height="16" viewBox="0 0 16 16"><path d="M1 4L4 1H15V12L12 15H1Z" fill="#c2469e"/><path d="M1 4H12V15M12 4L15 1" fill="none" stroke="#e8a8d8" stroke-width="0.7"/></svg><svg style="position:absolute;left:63px;top:785px" width="7" height="10"><path d="M0.5 0.5L6 5L0.5 9.5Z" fill="none" stroke="#8a8d91" stroke-width="1"/></svg><div class="t " style="left:99.0px;top:784.6px;font-size:12px;line-height:12px;color:#111;">1D Plot Group 6</div><svg style="position:absolute;left:78.0px;top:782.0px" width="16" height="16" viewBox="0 0 16 16"><path d="M1 10Q4.5 3 8 8T15 7" fill="none" stroke="#c2469e" stroke-width="1.2"/></svg><div class="t " style="left:99.0px;top:802.6px;font-size:12px;line-height:12px;color:#111;">Export</div><svg style="position:absolute;left:78.0px;top:800.0px" width="16" height="16" viewBox="0 0 16 16"><path d="M1 4H13L15 6V14H3L1 12Z" fill="#f4e8f2" stroke="#c2469e" stroke-width="1"/><rect x="5" y="7" width="7" height="5" fill="none" stroke="#c2469e" stroke-width="0.9"/><path d="M1 4L3 6H15M3 6V14" fill="none" stroke="#c2469e" stroke-width="0.8"/></svg><div class="t " style="left:99.0px;top:820.6px;font-size:12px;line-height:12px;color:#111;">Reports</div><svg style="position:absolute;left:78.0px;top:818.0px" width="16" height="16" viewBox="0 0 16 16"><rect x="2" y="2" width="11" height="13" fill="#fff" stroke="#c2469e" stroke-width="1"/><path d="M4 6H8M4 9H7M4 12H7" stroke="#c2469e" stroke-width="0.9"/><path d="M7 12L14 3L15.5 4.5L8.5 13.5L6.5 14Z" fill="#c2469e"/></svg><div class="t " style="left:325.0px;top:187.2px;font-size:14.5px;line-height:14.5px;color:#4a87ba;letter-spacing:-0.3px;-webkit-text-stroke:0.2px #f9fafc">Geometrical Optics</div><div class="t " style="left:324.0px;top:221.0px;font-size:12px;line-height:12px;color:#111;">Label:</div><div style="position:absolute;left:369px;top:218px;width:388px;height:18px;background:#ffffff;border:1px solid #d4d5d7;box-sizing:border-box"></div><div class="t " style="left:372.5px;top:221.1px;font-size:12px;line-height:12px;color:#111;">Geometrical Optics</div><div style="position:absolute;left:765px;top:216px;width:21px;height:22px;background:#eef0f2;border:1px solid #cfd2d6;box-sizing:border-box;border-radius:2px"></div><svg style="position:absolute;left:765px;top:216px" width="21" height="22"><rect x="3.5" y="4" width="13" height="12.5" rx="1" fill="#fff" stroke="#707378" stroke-width="1.1"/><rect x="4" y="4.5" width="12" height="2.3" fill="#c8cacd"/><path d="M8 10H15M8 12.5H15" stroke="#2a9aa8" stroke-width="1"/><path d="M2.5 18.5L7 14M4.5 13.5H7.5V16.5" fill="none" stroke="#2a9aa8" stroke-width="1.5"/></svg><div class="t " style="left:324.0px;top:247.0px;font-size:12px;line-height:12px;color:#111;">Name:</div><div style="position:absolute;left:369px;top:244px;width:388px;height:18px;background:#ffffff;border:1px solid #d4d5d7;box-sizing:border-box"></div><div class="t " style="left:372.5px;top:247.1px;font-size:12px;line-height:12px;color:#111;">gop</div><div style="position:absolute;left:319px;top:271px;width:471px;height:25px;background:#dfe8f3"></div><svg style="position:absolute;left:324px;top:279.5px" width="9" height="6"><path d="M0 0H9L4.5 5.5Z" fill="#4a4d52"/></svg><div class="t " style="left:345.0px;top:277.1px;font-size:13px;line-height:13px;color:#111;">Domain Selection</div><div class="t " style="left:324.0px;top:311.1px;font-size:12px;line-height:12px;color:#111;">Selection:</div><div style="position:absolute;left:385px;top:307px;width:400px;height:20px;background:linear-gradient(#f4f4f5,#ebebec);border:1px solid #d4d5d7;box-sizing:border-box;border-radius:1px"></div><div class="t " style="left:398.0px;top:311.1px;font-size:12px;line-height:12px;color:#111;">All domains</div><svg style="position:absolute;left:769px;top:315.0px" width="8" height="5"><path d="M0 0H8L4 4.5Z" fill="#111"/></svg><div style="position:absolute;left:324px;top:334px;width:38px;height:38px;background:#a6d2f7;border:1px solid #5aa0dc;box-sizing:border-box;border-radius:2px"></div><svg style="position:absolute;left:327px;top:344px" width="32" height="18"><rect x="1.5" y="2.5" width="28" height="12" rx="2" fill="#e8e8e8" stroke="#555" stroke-width="1.2"/><rect x="4" y="5" width="15" height="7" rx="1" fill="#4caa4c"/><rect x="19" y="4.5" width="9" height="8" fill="#b8b8b8" stroke="#666" stroke-width="0.8"/></svg><div style="position:absolute;left:370px;top:334px;width:357px;height:119px;background:#f9fafc;border:1px solid #d6d8db;border-bottom:3px solid #c8cacd;box-sizing:border-box"></div><div class="t " style="left:377.5px;top:338.8px;font-size:12px;line-height:12px;color:#111;">1</div><svg style="position:absolute;left:738px;top:332px" width="50" height="78"><g fill="none" stroke="#8a9098" stroke-width="1"><rect x="3.5" y="3.5" width="5" height="4"/><rect x="7.5" y="7.5" width="5" height="4"/></g><rect x="11" y="11" width="5" height="4" fill="#3a8ad6"/><path d="M38.5 3V16M32 9.5H45" stroke="#9aa0a6" stroke-width="1"/><g fill="#fff" stroke="#8a9098" stroke-width="1"><rect x="3.5" y="22.5" width="9" height="10"/><rect x="6.5" y="25.5" width="9" height="10"/></g><path d="M8.5 29H13.5M8.5 31H13.5M8.5 33H13.5" stroke="#3a8ad6" stroke-width="0.8"/><path d="M32 28.5H45" stroke="#3a8ad6" stroke-width="1.2"/><g fill="#fff" stroke="#8a9098" stroke-width="1"><rect x="3.5" y="42.5" width="9" height="10"/><rect x="7.5" y="46.5" width="8" height="9"/></g><rect x="32.5" y="42.5" width="12" height="12" fill="none" stroke="#3a8ad6" stroke-dasharray="2 1"/><path d="M33 43L43 55" stroke="#555" stroke-width="1"/><path d="M36 49L42 55L38 56Z" fill="#f0a030"/><rect x="4.5" y="63.5" width="9" height="9" fill="none" stroke="#7a8088" stroke-width="1"/><path d="M9 65V72M5.5 68H12.5" stroke="#7a8088"/><path d="M9 60L10.5 62H7.5ZM9 76L10.5 74H7.5ZM1 68L3 66.5V69.5ZM17 68L15 66.5V69.5Z" fill="#3a8ad6"/></svg><div style="position:absolute;left:319px;top:465px;width:471px;height:25px;background:#dfe8f3"></div><svg style="position:absolute;left:324px;top:473.5px" width="9" height="6"><path d="M0 0H9L4.5 5.5Z" fill="#4a4d52"/></svg><div class="t " style="left:345.0px;top:471.1px;font-size:13px;line-height:13px;color:#111;">Equation</div><div class="t " style="left:324.0px;top:500.8px;font-size:12px;line-height:12px;color:#111;">Equation form:</div><div style="position:absolute;left:324px;top:520px;width:461px;height:21px;background:linear-gradient(#f4f4f5,#ebebec);border:1px solid #d4d5d7;box-sizing:border-box;border-radius:1px"></div><div class="t " style="left:337.0px;top:524.6px;font-size:12px;line-height:12px;color:#111;">Study controlled</div><svg style="position:absolute;left:769px;top:528.5px" width="8" height="5"><path d="M0 0H8L4 4.5Z" fill="#111"/></svg><div class="t " style="left:324.0px;top:549.1px;font-size:12px;line-height:12px;color:#111;">Show equation assuming:</div><div style="position:absolute;left:324px;top:568px;width:461px;height:21px;background:linear-gradient(#f4f4f5,#ebebec);border:1px solid #d4d5d7;box-sizing:border-box;border-radius:1px"></div><div class="t " style="left:337.0px;top:572.6px;font-size:12px;line-height:12px;color:#111;">Study 1, Ray Tracing</div><svg style="position:absolute;left:769px;top:576.5px" width="8" height="5"><path d="M0 0H8L4 4.5Z" fill="#111"/></svg><div class="t" style="left:326px;top:597px;width:18px;text-align:center;font-size:13px;line-height:14px;font-style:italic;color:#111">d<b style="font-style:normal">q</b></div><div style="position:absolute;left:326px;top:612px;width:18px;height:1px;background:#111"></div><div class="t" style="left:326px;top:615px;width:18px;text-align:center;font-size:13px;line-height:14px;font-style:italic;color:#111">dt</div><div class="t " style="left:348.5px;top:605.0px;font-size:16px;line-height:16px;color:#111;">=</div><div class="t" style="left:363px;top:597px;width:20px;text-align:center;font-size:13px;line-height:14px;font-style:italic;color:#111">∂ω</div><div style="position:absolute;left:363px;top:612px;width:20px;height:1px;background:#111"></div><div class="t" style="left:363px;top:615px;width:20px;text-align:center;font-size:13px;line-height:14px;font-style:italic;color:#111">∂<b style="font-style:normal">k</b></div><div class="t" style="left:326px;top:637px;width:18px;text-align:center;font-size:13px;line-height:14px;font-style:italic;color:#111">d<b style="font-style:normal">k</b></div><div style="position:absolute;left:326px;top:652px;width:18px;height:1px;background:#111"></div><div class="t" style="left:326px;top:655px;width:18px;text-align:center;font-size:13px;line-height:14px;font-style:italic;color:#111">dt</div><div class="t " style="left:349.0px;top:645.0px;font-size:16px;line-height:16px;color:#111;">=</div><div class="t " style="left:363.5px;top:645.8px;font-size:12px;line-height:12px;color:#111;">-</div><div class="t" style="left:369px;top:637px;width:21px;text-align:center;font-size:13px;line-height:14px;font-style:italic;color:#111">∂ω</div><div style="position:absolute;left:369px;top:652px;width:21px;height:1px;background:#111"></div><div class="t" style="left:369px;top:655px;width:21px;text-align:center;font-size:13px;line-height:14px;font-style:italic;color:#111">∂<b style="font-style:normal">q</b></div><div style="position:absolute;left:319px;top:684px;width:471px;height:26px;background:#dfe8f3"></div><svg style="position:absolute;left:324px;top:693.0px" width="9" height="6"><path d="M0 0H9L4.5 5.5Z" fill="#4a4d52"/></svg><div class="t " style="left:345.0px;top:690.6px;font-size:13px;line-height:13px;color:#111;">Ray Release and Propagation</div><div class="t " style="left:324.0px;top:721.3px;font-size:12px;line-height:12px;color:#111;">Wavelength distribution of released rays:</div><div style="position:absolute;left:324px;top:740px;width:461px;height:21px;background:linear-gradient(#f4f4f5,#ebebec);border:1px solid #d4d5d7;box-sizing:border-box;border-radius:1px"></div><div class="t " style="left:337.0px;top:744.6px;font-size:12px;line-height:12px;color:#111;">Monochromatic</div><svg style="position:absolute;left:769px;top:748.5px" width="8" height="5"><path d="M0 0H8L4 4.5Z" fill="#111"/></svg><div class="t " style="left:324.0px;top:769.1px;font-size:12px;line-height:12px;color:#111;">Maximum number of secondary rays:</div><div style="position:absolute;left:324px;top:788px;width:461px;height:18px;background:#ffffff;border:1px solid #d4d5d7;box-sizing:border-box"></div><div class="t " style="left:327.0px;top:791.1px;font-size:12px;line-height:12px;color:#111;">0</div><div style="position:absolute;left:325px;top:813px;width:13px;height:13px;background:#fff;border:1px solid #555;box-sizing:border-box"></div><svg style="position:absolute;left:325px;top:813px" width="13" height="13"><path d="M3 6.5L5.5 9.5L10.5 2.5" fill="none" stroke="#111" stroke-width="1.6"/></svg><div class="t " style="left:344.0px;top:813.1px;font-size:12px;line-height:12px;color:#111;">Use geometry normals for ray-boundary interactions</div><div style="position:absolute;left:325px;top:834px;width:13px;height:13px;background:#fff;border:1px solid #555;box-sizing:border-box"></div><svg style="position:absolute;left:325px;top:834px" width="13" height="13"><path d="M3 6.5L5.5 9.5L10.5 2.5" fill="none" stroke="#111" stroke-width="1.6"/></svg><div class="t " style="left:344.0px;top:834.1px;font-size:12px;line-height:12px;color:#111;">Only store accumulated variables in solution</div><div style="position:absolute;left:319px;top:859px;width:471px;height:26px;background:#dfe8f3"></div><svg style="position:absolute;left:325px;top:866.5px" width="7" height="10"><path d="M0.5 0.5L6 5L0.5 9.5Z" fill="none" stroke="#8a8d91" stroke-width="1"/></svg><div class="t " style="left:345.0px;top:865.6px;font-size:13px;line-height:13px;color:#111;">Material Properties of Exterior and Unmeshed Domains</div><div style="position:absolute;left:319px;top:887px;width:471px;height:26px;background:#dfe8f3"></div><svg style="position:absolute;left:325px;top:894.5px" width="7" height="10"><path d="M0.5 0.5L6 5L0.5 9.5Z" fill="none" stroke="#8a8d91" stroke-width="1"/></svg><div class="t " style="left:345.0px;top:893.6px;font-size:13px;line-height:13px;color:#111;">Intensity Computation</div><div style="position:absolute;left:319px;top:915px;width:471px;height:26px;background:#dfe8f3"></div><svg style="position:absolute;left:325px;top:922.5px" width="7" height="10"><path d="M0.5 0.5L6 5L0.5 9.5Z" fill="none" stroke="#8a8d91" stroke-width="1"/></svg><div class="t " style="left:345.0px;top:921.6px;font-size:13px;line-height:13px;color:#111;">Additional Variables</div><div style="position:absolute;left:319px;top:943px;width:471px;height:26px;background:#dfe8f3"></div><svg style="position:absolute;left:325px;top:950.5px" width="7" height="10"><path d="M0.5 0.5L6 5L0.5 9.5Z" fill="none" stroke="#8a8d91" stroke-width="1"/></svg><div class="t " style="left:345.0px;top:949.6px;font-size:13px;line-height:13px;color:#111;">Dependent Variables</div><svg style="position:absolute;left:797px;top:150px" width="1110" height="887" viewBox="797 150 1110 887"><line x1="904" y1="443" x2="920" y2="920" stroke="#8f9296" stroke-width="1"/><line x1="1298.4" y1="320" x2="1304" y2="800" stroke="#8f9296" stroke-width="1"/><line x1="1640.5" y1="214" x2="1638.5" y2="663" stroke="#8f9296" stroke-width="1"/><line x1="905" y1="503" x2="1640.5" y2="267.4" stroke="#8f9296" stroke-width="1"/><line x1="909" y1="624" x2="1640.5" y2="373.4" stroke="#8f9296" stroke-width="1"/><line x1="915" y1="744" x2="1640.5" y2="479" stroke="#8f9296" stroke-width="1"/><line x1="918.3" y1="862.7" x2="1640.5" y2="584" stroke="#8f9296" stroke-width="1"/><line x1="1681.5" y1="213" x2="1683" y2="300" stroke="#8f9296" stroke-width="1"/><line x1="1726.3" y1="220" x2="1723" y2="641" stroke="#8f9296" stroke-width="1"/><line x1="1772" y1="227" x2="1768" y2="650.6" stroke="#8f9296" stroke-width="1"/><line x1="1640.5" y1="267.4" x2="1772" y2="281" stroke="#8f9296" stroke-width="1"/><line x1="1640.5" y1="373.4" x2="1772" y2="387" stroke="#8f9296" stroke-width="1"/><line x1="1640.5" y1="479" x2="1772" y2="494" stroke="#8f9296" stroke-width="1"/><line x1="1640.5" y1="584" x2="1768" y2="598.3" stroke="#8f9296" stroke-width="1"/><line x1="946.7" y1="958.3" x2="1040.6" y2="983.3" stroke="#8f9296" stroke-width="1"/><line x1="1304" y1="800" x2="1420.7" y2="824.8" stroke="#8f9296" stroke-width="1"/><line x1="1644" y1="663" x2="1750.6" y2="685.6" stroke="#8f9296" stroke-width="1"/><line x1="946.7" y1="958.3" x2="1644" y2="663" stroke="#8f9296" stroke-width="1"/><line x1="995" y1="971.7" x2="1705.6" y2="676.5" stroke="#8f9296" stroke-width="1"/><line x1="1040.6" y1="983.3" x2="1750.6" y2="685.6" stroke="#8f9296" stroke-width="1"/><circle r="1" fill="none" stroke="#1a1a1a" stroke-width="1" vector-effect="non-scaling-stroke" transform="matrix(1.5,-59.5,46.5,12.4,990.5,880.5)"/><polygon points="994.10,452.20 1044.10,435.90 1054.90,795.40 1657.50,563.09 1658.10,240.90 1696.30,228.70 1695.00,548.63 1707.00,544.00 1706.30,648.80 992.00,940.00 988.90,821.10 1004.60,815.00" fill="#030208" /><defs><filter id="nz" x="-2%" y="-10%" width="104%" height="120%" color-interpolation-filters="sRGB"><feTurbulence type="fractalNoise" baseFrequency="0.09 0.16" numOctaves="3" seed="7" result="t"/><feDisplacementMap in="SourceGraphic" in2="t" scale="9" xChannelSelector="R" yChannelSelector="G"/></filter><clipPath id="tubeclip"><polygon points="1132.00,765.83 1657.50,563.09 1707.00,544.00 1707.00,585.80 1132.00,812.50"/><polygon points="1132.00,835.10 1707.00,608.30 1707.00,648.28 1132.00,882.88"/></clipPath></defs><g clip-path="url(#tubeclip)"><g filter="url(#nz)"><polygon points="1120.00,765.78 1712.00,537.89 1712.00,539.28 1120.00,767.34" fill="rgb(20,10,40)" stroke="rgb(20,10,40)" stroke-width="0.6"/><polygon points="1120.00,767.34 1712.00,539.28 1712.00,540.67 1120.00,768.90" fill="rgb(20,10,40)" stroke="rgb(20,10,40)" stroke-width="0.6"/><polygon points="1120.00,768.90 1712.00,540.67 1712.00,542.07 1120.00,770.46" fill="rgb(20,10,40)" stroke="rgb(20,10,40)" stroke-width="0.6"/><polygon points="1120.00,770.46 1712.00,542.07 1712.00,543.46 1120.00,772.02" fill="rgb(21,10,42)" stroke="rgb(21,10,42)" stroke-width="0.6"/><polygon points="1120.00,772.02 1712.00,543.46 1712.00,544.85 1120.00,773.58" fill="rgb(24,10,47)" stroke="rgb(24,10,47)" stroke-width="0.6"/><polygon points="1120.00,773.58 1712.00,544.85 1712.00,546.24 1120.00,775.14" fill="rgb(26,11,52)" stroke="rgb(26,11,52)" stroke-width="0.6"/><polygon points="1120.00,775.14 1712.00,546.24 1712.00,547.63 1120.00,776.70" fill="rgb(29,11,57)" stroke="rgb(29,11,57)" stroke-width="0.6"/><polygon points="1120.00,776.70 1712.00,547.63 1712.00,549.03 1120.00,778.25" fill="rgb(33,13,63)" stroke="rgb(33,13,63)" stroke-width="0.6"/><polygon points="1120.00,778.25 1712.00,549.03 1712.00,550.42 1120.00,779.81" fill="rgb(37,14,69)" stroke="rgb(37,14,69)" stroke-width="0.6"/><polygon points="1120.00,779.81 1712.00,550.42 1712.00,551.81 1120.00,781.37" fill="rgb(40,15,75)" stroke="rgb(40,15,75)" stroke-width="0.6"/><polygon points="1120.00,781.37 1712.00,551.81 1712.00,553.20 1120.00,782.93" fill="rgb(44,16,81)" stroke="rgb(44,16,81)" stroke-width="0.6"/><polygon points="1120.00,782.93 1712.00,553.20 1712.00,554.59 1120.00,784.49" fill="rgb(48,17,87)" stroke="rgb(48,17,87)" stroke-width="0.6"/><polygon points="1120.00,784.49 1712.00,554.59 1712.00,555.99 1120.00,786.05" fill="rgb(51,18,91)" stroke="rgb(51,18,91)" stroke-width="0.6"/><polygon points="1120.00,786.05 1712.00,555.99 1712.00,557.38 1120.00,787.61" fill="rgb(55,19,93)" stroke="rgb(55,19,93)" stroke-width="0.6"/><polygon points="1120.00,787.61 1712.00,557.38 1712.00,558.77 1120.00,789.17" fill="rgb(59,20,95)" stroke="rgb(59,20,95)" stroke-width="0.6"/><polygon points="1120.00,789.17 1712.00,558.77 1712.00,560.16 1120.00,790.73" fill="rgb(62,21,98)" stroke="rgb(62,21,98)" stroke-width="0.6"/><polygon points="1120.00,790.73 1712.00,560.16 1712.00,561.55 1120.00,792.29" fill="rgb(66,22,100)" stroke="rgb(66,22,100)" stroke-width="0.6"/><polygon points="1120.00,792.29 1712.00,561.55 1712.00,562.95 1120.00,793.84" fill="rgb(70,23,102)" stroke="rgb(70,23,102)" stroke-width="0.6"/><polygon points="1120.00,793.84 1712.00,562.95 1712.00,564.34 1120.00,795.40" fill="rgb(74,24,104)" stroke="rgb(74,24,104)" stroke-width="0.6"/><polygon points="1120.00,795.40 1712.00,564.34 1712.00,565.73 1120.00,796.96" fill="rgb(80,26,106)" stroke="rgb(80,26,106)" stroke-width="0.6"/><polygon points="1120.00,796.96 1712.00,565.73 1712.00,567.12 1120.00,798.52" fill="rgb(85,28,108)" stroke="rgb(85,28,108)" stroke-width="0.6"/><polygon points="1120.00,798.52 1712.00,567.12 1712.00,568.51 1120.00,800.08" fill="rgb(90,30,110)" stroke="rgb(90,30,110)" stroke-width="0.6"/><polygon points="1120.00,800.08 1712.00,568.51 1712.00,569.91 1120.00,801.64" fill="rgb(95,31,112)" stroke="rgb(95,31,112)" stroke-width="0.6"/><polygon points="1120.00,801.64 1712.00,569.91 1712.00,571.30 1120.00,803.20" fill="rgb(104,36,110)" stroke="rgb(104,36,110)" stroke-width="0.6"/><polygon points="1120.00,803.20 1712.00,571.30 1712.00,572.69 1120.00,804.76" fill="rgb(113,41,109)" stroke="rgb(113,41,109)" stroke-width="0.6"/><polygon points="1120.00,804.76 1712.00,572.69 1712.00,574.08 1120.00,806.32" fill="rgb(122,45,108)" stroke="rgb(122,45,108)" stroke-width="0.6"/><polygon points="1120.00,806.32 1712.00,574.08 1712.00,575.47 1120.00,807.87" fill="rgb(131,51,107)" stroke="rgb(131,51,107)" stroke-width="0.6"/><polygon points="1120.00,807.87 1712.00,575.47 1712.00,576.87 1120.00,809.43" fill="rgb(145,62,100)" stroke="rgb(145,62,100)" stroke-width="0.6"/><polygon points="1120.00,809.43 1712.00,576.87 1712.00,578.26 1120.00,810.99" fill="rgb(159,73,93)" stroke="rgb(159,73,93)" stroke-width="0.6"/><polygon points="1120.00,810.99 1712.00,578.26 1712.00,579.65 1120.00,812.55" fill="rgb(173,85,87)" stroke="rgb(173,85,87)" stroke-width="0.6"/><polygon points="1120.00,812.55 1712.00,579.65 1712.00,581.04 1120.00,814.11" fill="rgb(184,95,85)" stroke="rgb(184,95,85)" stroke-width="0.6"/><polygon points="1120.00,814.11 1712.00,581.04 1712.00,582.43 1120.00,815.67" fill="rgb(195,106,83)" stroke="rgb(195,106,83)" stroke-width="0.6"/><polygon points="1120.00,815.67 1712.00,582.43 1712.00,583.83 1120.00,817.23" fill="rgb(206,116,81)" stroke="rgb(206,116,81)" stroke-width="0.6"/><polygon points="1120.00,817.23 1712.00,583.83 1712.00,585.22 1120.00,818.79" fill="rgb(212,122,80)" stroke="rgb(212,122,80)" stroke-width="0.6"/><polygon points="1120.00,818.79 1712.00,585.22 1712.00,586.61 1120.00,820.35" fill="rgb(212,122,80)" stroke="rgb(212,122,80)" stroke-width="0.6"/><polygon points="1120.00,820.35 1712.00,586.61 1712.00,588.00 1120.00,821.90" fill="rgb(212,122,80)" stroke="rgb(212,122,80)" stroke-width="0.6"/><polygon points="1120.00,835.04 1712.00,602.34 1712.00,603.67 1120.00,836.64" fill="rgb(212,122,80)" stroke="rgb(212,122,80)" stroke-width="0.6"/><polygon points="1120.00,836.64 1712.00,603.67 1712.00,605.00 1120.00,838.23" fill="rgb(212,122,80)" stroke="rgb(212,122,80)" stroke-width="0.6"/><polygon points="1120.00,838.23 1712.00,605.00 1712.00,606.33 1120.00,839.83" fill="rgb(212,122,80)" stroke="rgb(212,122,80)" stroke-width="0.6"/><polygon points="1120.00,839.83 1712.00,606.33 1712.00,607.66 1120.00,841.43" fill="rgb(206,116,81)" stroke="rgb(206,116,81)" stroke-width="0.6"/><polygon points="1120.00,841.43 1712.00,607.66 1712.00,608.99 1120.00,843.03" fill="rgb(194,105,83)" stroke="rgb(194,105,83)" stroke-width="0.6"/><polygon points="1120.00,843.03 1712.00,608.99 1712.00,610.32 1120.00,844.63" fill="rgb(182,93,85)" stroke="rgb(182,93,85)" stroke-width="0.6"/><polygon points="1120.00,844.63 1712.00,610.32 1712.00,611.65 1120.00,846.23" fill="rgb(168,82,89)" stroke="rgb(168,82,89)" stroke-width="0.6"/><polygon points="1120.00,846.23 1712.00,611.65 1712.00,612.98 1120.00,847.82" fill="rgb(154,70,97)" stroke="rgb(154,70,97)" stroke-width="0.6"/><polygon points="1120.00,847.82 1712.00,612.98 1712.00,614.31 1120.00,849.42" fill="rgb(139,58,104)" stroke="rgb(139,58,104)" stroke-width="0.6"/><polygon points="1120.00,849.42 1712.00,614.31 1712.00,615.64 1120.00,851.02" fill="rgb(127,49,108)" stroke="rgb(127,49,108)" stroke-width="0.6"/><polygon points="1120.00,851.02 1712.00,615.64 1712.00,616.97 1120.00,852.62" fill="rgb(117,43,109)" stroke="rgb(117,43,109)" stroke-width="0.6"/><polygon points="1120.00,852.62 1712.00,616.97 1712.00,618.30 1120.00,854.22" fill="rgb(107,38,110)" stroke="rgb(107,38,110)" stroke-width="0.6"/><polygon points="1120.00,854.22 1712.00,618.30 1712.00,619.63 1120.00,855.81" fill="rgb(97,32,111)" stroke="rgb(97,32,111)" stroke-width="0.6"/><polygon points="1120.00,855.81 1712.00,619.63 1712.00,620.96 1120.00,857.41" fill="rgb(92,30,111)" stroke="rgb(92,30,111)" stroke-width="0.6"/><polygon points="1120.00,857.41 1712.00,620.96 1712.00,622.29 1120.00,859.01" fill="rgb(87,29,109)" stroke="rgb(87,29,109)" stroke-width="0.6"/><polygon points="1120.00,859.01 1712.00,622.29 1712.00,623.62 1120.00,860.61" fill="rgb(83,28,108)" stroke="rgb(83,28,108)" stroke-width="0.6"/><polygon points="1120.00,860.61 1712.00,623.62 1712.00,624.95 1120.00,862.21" fill="rgb(78,26,107)" stroke="rgb(78,26,107)" stroke-width="0.6"/><polygon points="1120.00,862.21 1712.00,624.95 1712.00,626.29 1120.00,863.80" fill="rgb(74,25,106)" stroke="rgb(74,25,106)" stroke-width="0.6"/><polygon points="1120.00,863.80 1712.00,626.29 1712.00,627.62 1120.00,865.40" fill="rgb(70,24,105)" stroke="rgb(70,24,105)" stroke-width="0.6"/><polygon points="1120.00,865.40 1712.00,627.62 1712.00,628.95 1120.00,867.00" fill="rgb(68,24,103)" stroke="rgb(68,24,103)" stroke-width="0.6"/><polygon points="1120.00,867.00 1712.00,628.95 1712.00,630.28 1120.00,868.60" fill="rgb(66,23,102)" stroke="rgb(66,23,102)" stroke-width="0.6"/><polygon points="1120.00,868.60 1712.00,630.28 1712.00,631.61 1120.00,870.20" fill="rgb(64,22,100)" stroke="rgb(64,22,100)" stroke-width="0.6"/><polygon points="1120.00,870.20 1712.00,631.61 1712.00,632.94 1120.00,871.79" fill="rgb(62,22,98)" stroke="rgb(62,22,98)" stroke-width="0.6"/><polygon points="1120.00,871.79 1712.00,632.94 1712.00,634.27 1120.00,873.39" fill="rgb(60,21,97)" stroke="rgb(60,21,97)" stroke-width="0.6"/><polygon points="1120.00,873.39 1712.00,634.27 1712.00,635.60 1120.00,874.99" fill="rgb(58,20,95)" stroke="rgb(58,20,95)" stroke-width="0.6"/><polygon points="1120.00,874.99 1712.00,635.60 1712.00,636.93 1120.00,876.59" fill="rgb(56,20,94)" stroke="rgb(56,20,94)" stroke-width="0.6"/><polygon points="1120.00,876.59 1712.00,636.93 1712.00,638.26 1120.00,878.19" fill="rgb(52,18,89)" stroke="rgb(52,18,89)" stroke-width="0.6"/><polygon points="1120.00,878.19 1712.00,638.26 1712.00,639.59 1120.00,879.79" fill="rgb(49,17,85)" stroke="rgb(49,17,85)" stroke-width="0.6"/><polygon points="1120.00,879.79 1712.00,639.59 1712.00,640.92 1120.00,881.38" fill="rgb(46,16,80)" stroke="rgb(46,16,80)" stroke-width="0.6"/><polygon points="1120.00,881.38 1712.00,640.92 1712.00,642.25 1120.00,882.98" fill="rgb(43,15,76)" stroke="rgb(43,15,76)" stroke-width="0.6"/><polygon points="1120.00,882.98 1712.00,642.25 1712.00,643.58 1120.00,884.58" fill="rgb(39,14,70)" stroke="rgb(39,14,70)" stroke-width="0.6"/><polygon points="1120.00,884.58 1712.00,643.58 1712.00,644.91 1120.00,886.18" fill="rgb(35,13,63)" stroke="rgb(35,13,63)" stroke-width="0.6"/><polygon points="1120.00,886.18 1712.00,644.91 1712.00,646.24 1120.00,887.78" fill="rgb(30,11,55)" stroke="rgb(30,11,55)" stroke-width="0.6"/><polygon points="1120.00,887.78 1712.00,646.24 1712.00,647.57 1120.00,889.37" fill="rgb(28,11,52)" stroke="rgb(28,11,52)" stroke-width="0.6"/><polygon points="1120.00,889.37 1712.00,647.57 1712.00,648.90 1120.00,890.97" fill="rgb(28,11,52)" stroke="rgb(28,11,52)" stroke-width="0.6"/><polygon points="1120.00,890.97 1712.00,648.90 1712.00,650.23 1120.00,892.57" fill="rgb(28,11,52)" stroke="rgb(28,11,52)" stroke-width="0.6"/></g></g><defs><linearGradient id="rpj" x1="0" y1="0" x2="0" y2="1"><stop offset="0" stop-color="#030208" stop-opacity="0"/><stop offset="1" stop-color="#2a1048" stop-opacity="1"/></linearGradient><linearGradient id="fadeL" x1="0" y1="0" x2="1" y2="0"><stop offset="0" stop-color="#030208" stop-opacity="1"/><stop offset="0.3" stop-color="#030208" stop-opacity="0.92"/><stop offset="0.7" stop-color="#030208" stop-opacity="0.35"/><stop offset="1" stop-color="#030208" stop-opacity="0"/></linearGradient></defs><polygon points="1657.50,520.00 1695.00,520.00 1695.00,548.63 1657.50,563.09" fill="url(#rpj)" /><polygon points="1130.00,766.60 1157.00,756.19 1157.00,872.68 1130.00,883.70" fill="url(#fadeL)" /><polygon points="1150.50,805.20 1707.00,585.80 1707.00,608.30 1150.50,827.80" fill="#f4f7fb" /><clipPath id="lampclip"><polygon points="1150.50,805.20 1707.00,585.80 1707.00,608.30 1150.50,827.80"/></clipPath><g clip-path="url(#lampclip)"><line x1="1298.4" y1="320" x2="1304" y2="800" stroke="#8f9296" stroke-width="1"/><line x1="1640.5" y1="214" x2="1638.5" y2="663" stroke="#8f9296" stroke-width="1"/><line x1="1681.5" y1="213" x2="1683" y2="663" stroke="#8f9296" stroke-width="1"/><path d="M1666 585Q1672 598 1667 611" fill="none" stroke="#222" stroke-width="0.9"/></g><line x1="1150.5" y1="805.20287" x2="1707" y2="585.79718" stroke="#151515" stroke-width="1"/><line x1="1150.5" y1="827.802785" x2="1707" y2="608.30249" stroke="#151515" stroke-width="1"/><line x1="1158" y1="809.74592" x2="1707" y2="593.29718" stroke="#151515" stroke-width="0.9"/><line x1="1158" y1="819.24592" x2="1707" y2="602.79718" stroke="#151515" stroke-width="0.9"/><path d="M1150.50 805.20 L1151.13 805.24 L1151.75 805.34 L1152.37 805.52 L1152.97 805.76 L1153.56 806.06 L1154.13 806.43 L1154.68 806.87 L1155.20 807.36 L1155.70 807.91 L1156.16 808.51 L1156.58 809.16 L1156.97 809.86 L1157.32 810.60 L1157.63 811.37 L1157.89 812.18 L1158.11 813.01 L1158.28 813.86 L1158.40 814.74 L1158.48 815.62 L1158.50 816.50 L1158.48 817.39 L1158.40 818.27 L1158.28 819.14 L1158.11 819.99 L1157.89 820.83 L1157.63 821.63 L1157.32 822.41 L1156.97 823.14 L1156.58 823.84 L1156.16 824.49 L1155.70 825.10 L1155.20 825.64 L1154.68 826.14 L1154.13 826.57 L1153.56 826.94 L1152.97 827.25 L1152.37 827.49 L1151.75 827.66 L1151.13 827.77 L1150.50 827.80" fill="none" stroke="#151515" stroke-width="1"/><circle r="1" fill="none" stroke="#151515" stroke-width="1" vector-effect="non-scaling-stroke" transform="matrix(0.3,-11.3,8.5,1.8,1707.5,597)"/><line x1="989" y1="821" x2="1657.5" y2="563.0927" stroke="#151515" stroke-width="1"/><line x1="1695" y1="548.6252" x2="1707" y2="543.9956" stroke="#151515" stroke-width="1"/><line x1="992" y1="940" x2="1706.3" y2="648.8" stroke="#151515" stroke-width="1"/><line x1="1142" y1="851.6" x2="1707" y2="623.6" stroke="#151515" stroke-width="1"/><line x1="1707" y1="623.6" x2="1750.6" y2="605.6" stroke="#151515" stroke-width="1"/><path d="M1707.00 544.30 L1710.48 545.20 L1713.94 546.41 L1717.35 547.94 L1720.70 549.76 L1723.96 551.87 L1727.11 554.26 L1730.14 556.90 L1733.02 559.79 L1735.74 562.91 L1738.28 566.24 L1740.62 569.75 L1742.76 573.42 L1744.67 577.24 L1746.34 581.18 L1747.77 585.21 L1748.95 589.31 L1749.87 593.45 L1750.52 597.62 L1750.89 601.78 L1751.00 605.90 L1750.83 609.97 L1750.39 613.95 L1749.68 617.83 L1748.70 621.57 L1747.47 625.16 L1745.98 628.57 L1744.25 631.79 L1742.29 634.79 L1740.10 637.55 L1737.71 640.06 L1735.13 642.30 L1732.37 644.26 L1729.46 645.92 L1726.40 647.28 L1723.22 648.32 L1719.94 649.05 L1716.58 649.45 L1713.15 649.53 L1709.68 649.28 L1706.20 648.70" fill="none" stroke="#151515" stroke-width="1"/><line x1="944" y1="869" x2="988.3" y2="851.7" stroke="#151515" stroke-width="1"/><line x1="991.5" y1="440" x2="1001.5" y2="813.7" stroke="#151515" stroke-width="1"/><line x1="992.7" y1="813.3" x2="1003.3" y2="811.7" stroke="#151515" stroke-width="1"/><line x1="1047.8" y1="450.4" x2="1057" y2="795.4" stroke="#151515" stroke-width="1"/><line x1="1650.6" y1="230.2" x2="1649.7" y2="562.5" stroke="#151515" stroke-width="1"/><line x1="1643" y1="562.5" x2="1650" y2="558" stroke="#151515" stroke-width="1"/><line x1="1703.8" y1="239.4" x2="1703.3" y2="544" stroke="#151515" stroke-width="1"/><path d="M1657.5 563.6Q1676 565 1697 573" fill="none" stroke="#111" stroke-width="1"/><circle r="1" fill="none" stroke="#151515" stroke-width="1" vector-effect="non-scaling-stroke" transform="matrix(25,-8.15,28.6,5.7,1019.1,444.05)"/><circle r="1" fill="none" stroke="#151515" stroke-width="1" vector-effect="non-scaling-stroke" transform="matrix(19.1,-6.1,27.95,3.5,1677.2,234.8)"/><defs><linearGradient id="cbg" x1="0" y1="0" x2="0" y2="1"><stop offset="0.0000" stop-color="#fbf6b0"/><stop offset="0.0783" stop-color="#fdeeab"/><stop offset="0.1705" stop-color="#fee0a2"/><stop offset="0.2627" stop-color="#fed193"/><stop offset="0.3548" stop-color="#fdc283"/><stop offset="0.4470" stop-color="#fcb074"/><stop offset="0.5392" stop-color="#fa9c66"/><stop offset="0.6313" stop-color="#f5835c"/><stop offset="0.6774" stop-color="#ee6e5a"/><stop offset="0.7235" stop-color="#e45c5e"/><stop offset="0.7696" stop-color="#cf4670"/><stop offset="0.8157" stop-color="#b4367c"/><stop offset="0.8618" stop-color="#88297c"/><stop offset="0.9078" stop-color="#581c76"/><stop offset="0.9539" stop-color="#2e1152"/><stop offset="0.9770" stop-color="#1c0c38"/><stop offset="1.0000" stop-color="#0a0614"/></linearGradient></defs><rect x="1836.5" y="273.5" width="15" height="727.5" fill="url(#cbg)" stroke="#4a4a4a" stroke-width="0.8"/><line x1="1836.5" y1="1001.0" x2="1839.5" y2="1001.0" stroke="#111" stroke-width="1.2"/><line x1="1848.5" y1="1001.0" x2="1851.5" y2="1001.0" stroke="#111" stroke-width="1.2"/><line x1="1836.5" y1="933.8" x2="1839.5" y2="933.8" stroke="#111" stroke-width="1.2"/><line x1="1848.5" y1="933.8" x2="1851.5" y2="933.8" stroke="#111" stroke-width="1.2"/><line x1="1836.5" y1="866.6" x2="1839.5" y2="866.6" stroke="#111" stroke-width="1.2"/><line x1="1848.5" y1="866.6" x2="1851.5" y2="866.6" stroke="#111" stroke-width="1.2"/><line x1="1836.5" y1="799.4" x2="1839.5" y2="799.4" stroke="#111" stroke-width="1.2"/><line x1="1848.5" y1="799.4" x2="1851.5" y2="799.4" stroke="#111" stroke-width="1.2"/><line x1="1836.5" y1="732.2" x2="1839.5" y2="732.2" stroke="#111" stroke-width="1.2"/><line x1="1848.5" y1="732.2" x2="1851.5" y2="732.2" stroke="#111" stroke-width="1.2"/><line x1="1836.5" y1="665.0" x2="1839.5" y2="665.0" stroke="#111" stroke-width="1.2"/><line x1="1848.5" y1="665.0" x2="1851.5" y2="665.0" stroke="#111" stroke-width="1.2"/><line x1="1836.5" y1="597.8" x2="1839.5" y2="597.8" stroke="#111" stroke-width="1.2"/><line x1="1848.5" y1="597.8" x2="1851.5" y2="597.8" stroke="#111" stroke-width="1.2"/><line x1="1836.5" y1="530.6" x2="1839.5" y2="530.6" stroke="#111" stroke-width="1.2"/><line x1="1848.5" y1="530.6" x2="1851.5" y2="530.6" stroke="#111" stroke-width="1.2"/><line x1="1836.5" y1="463.4" x2="1839.5" y2="463.4" stroke="#111" stroke-width="1.2"/><line x1="1848.5" y1="463.4" x2="1851.5" y2="463.4" stroke="#111" stroke-width="1.2"/><line x1="1836.5" y1="396.20000000000005" x2="1839.5" y2="396.20000000000005" stroke="#111" stroke-width="1.2"/><line x1="1848.5" y1="396.20000000000005" x2="1851.5" y2="396.20000000000005" stroke="#111" stroke-width="1.2"/><line x1="1836.5" y1="329.0" x2="1839.5" y2="329.0" stroke="#111" stroke-width="1.2"/><line x1="1848.5" y1="329.0" x2="1851.5" y2="329.0" stroke="#111" stroke-width="1.2"/></svg><div class="t " style="left:1860.5px;top:994.6px;font-size:13px;line-height:13px;color:#111;letter-spacing:0.45px">0</div><div class="t " style="left:1860.5px;top:927.4px;font-size:13px;line-height:13px;color:#111;letter-spacing:0.45px">20</div><div class="t " style="left:1860.5px;top:860.2px;font-size:13px;line-height:13px;color:#111;letter-spacing:0.45px">40</div><div class="t " style="left:1860.5px;top:793.0px;font-size:13px;line-height:13px;color:#111;letter-spacing:0.45px">60</div><div class="t " style="left:1860.5px;top:725.8px;font-size:13px;line-height:13px;color:#111;letter-spacing:0.45px">80</div><div class="t " style="left:1860.5px;top:658.6px;font-size:13px;line-height:13px;color:#111;letter-spacing:0.45px">100</div><div class="t " style="left:1860.5px;top:591.4px;font-size:13px;line-height:13px;color:#111;letter-spacing:0.45px">120</div><div class="t " style="left:1860.5px;top:524.2px;font-size:13px;line-height:13px;color:#111;letter-spacing:0.45px">140</div><div class="t " style="left:1860.5px;top:457.0px;font-size:13px;line-height:13px;color:#111;letter-spacing:0.45px">160</div><div class="t " style="left:1860.5px;top:389.8px;font-size:13px;line-height:13px;color:#111;letter-spacing:0.45px">180</div><div class="t " style="left:1860.5px;top:322.6px;font-size:13px;line-height:13px;color:#111;letter-spacing:0.45px">200</div><div class="t " style="left:813.9px;top:219.2px;font-size:13px;line-height:13px;color:#111;letter-spacing:0.45px">Time=6.6713E-10 s</div><div class="t " style="left:1263.4px;top:222.6px;font-size:13px;line-height:13px;color:#111;letter-spacing:0.45px">Slice: Fluence rate (mW/cm<sup style="font-size:9px;vertical-align:5px;line-height:0">2</sup>)</div><div class="t " style="left:-105.3px;width:1000px;text-align:right;top:498.4px;font-size:13px;line-height:13px;color:#111;letter-spacing:0.45px">0.3</div><div class="t " style="left:-100.9px;width:1000px;text-align:right;top:619.2px;font-size:13px;line-height:13px;color:#111;letter-spacing:0.45px">0.2</div><div class="t " style="left:-97.4px;width:1000px;text-align:right;top:739.2px;font-size:13px;line-height:13px;color:#111;letter-spacing:0.45px">0.1</div><div class="t " style="left:-92.6px;width:1000px;text-align:right;top:856.9px;font-size:13px;line-height:13px;color:#111;letter-spacing:0.45px">0</div><div class="t " style="left:857.0px;top:680.3px;font-size:12px;line-height:12px;color:#111;">m</div><div class="t " style="left:918.3px;top:967.6px;font-size:13px;line-height:13px;color:#111;letter-spacing:0.45px">-0.05</div><div class="t " style="left:982.7px;top:980.3px;font-size:13px;line-height:13px;color:#111;letter-spacing:0.45px">0</div><div class="t " style="left:1015.5px;top:992.5px;font-size:13px;line-height:13px;color:#111;letter-spacing:0.45px">0.05</div><div class="t " style="left:1045.5px;top:992.5px;font-size:13px;line-height:13px;color:#111;letter-spacing:0.45px">0</div><div class="t " style="left:959.5px;top:1017.3px;font-size:12px;line-height:12px;color:#111;">m</div><div class="t " style="left:1424.6px;top:832.6px;font-size:13px;line-height:13px;color:#111;letter-spacing:0.45px">0.5</div><div class="t " style="left:1443.6px;top:856.8px;font-size:12px;line-height:12px;color:#111;">m</div><div class="t " style="left:1756.0px;top:693.4px;font-size:13px;line-height:13px;color:#111;letter-spacing:0.45px">1</div><svg style="position:absolute;left:830px;top:950px" width="50" height="60" viewBox="830 950 50 60"><path d="M840.8 994V973" stroke="#c8307a" stroke-width="1.8"/><path d="M837.6 975L840.8 965.8L844 975Z" fill="#c8307a"/><path d="M840.8 994L857 998" stroke="#3aa84a" stroke-width="1.8"/><path d="M855 994.5L864 999L856 1000.5Z" fill="#3aa84a"/><path d="M840.8 994L853 989" stroke="#4a8ad0" stroke-width="1.6"/><path d="M852 986L858.5 986.5L854.5 991.5Z" fill="#4a8ad0"/></svg><div class="t " style="left:838.5px;top:951.3px;font-size:12px;line-height:12px;color:#111;">x</div><div class="t " style="left:861.0px;top:978.3px;font-size:12px;line-height:12px;color:#111;">z</div><div class="t " style="left:868.5px;top:993.8px;font-size:12px;line-height:12px;color:#111;">y</div><svg style="position:absolute;left:0;top:150px" width="1920" height="80" viewBox="0 150 1920 80"><path d="M287.7 165.0H295.2L291.45 168.8Z" fill="#3a8ad6"/><rect x="302.9" y="163.0" width="5.6" height="6" fill="#3a8ad6"/><path d="M301.5 169.3H310.0M305.7 169.3V172.8" stroke="#3a8ad6" stroke-width="1.2"/><path d="M764.2 165.0H771.7L767.95 168.8Z" fill="#555"/><rect x="779.4" y="163.0" width="5.6" height="6" fill="#555"/><path d="M778 169.3H786.5M782.2 169.3V172.8" stroke="#555" stroke-width="1.2"/><path d="M1867.2 165.0H1874.7L1870.95 168.8Z" fill="#555"/><rect x="1882.4" y="163.0" width="5.6" height="6" fill="#555"/><path d="M1881 169.3H1889.5M1885.2 169.3V172.8" stroke="#555" stroke-width="1.2"/><path d="M1895 162.5L1904 171.5M1904 162.5L1895 171.5" stroke="#333" stroke-width="1.3"/><path d="M22 191.5H34" stroke="#3a8ad6" stroke-width="1.3"/><path d="M20 191.5L25.5 187.8V195.2Z" fill="#3a8ad6"/><path d="M43 191.5H55" stroke="#9a9da2" stroke-width="1.3"/><path d="M57 191.5L51.5 187.8V195.2Z" fill="#9a9da2"/><path d="M72.5 187V199" stroke="#9a9da2" stroke-width="1.3"/><path d="M72.5 185L68.8 190.5H76.2Z" fill="#9a9da2"/><path d="M95.5 185V197" stroke="#3a8ad6" stroke-width="1.3"/><path d="M95.5 199L91.8 193.5H99.2Z" fill="#3a8ad6"/><path d="M112 186.5H125" stroke="#3a8ad6" stroke-width="1.5"/><ellipse cx="118.5" cy="192.3" rx="5.5" ry="2.6" fill="none" stroke="#3a8ad6" stroke-width="1.4"/><circle cx="118.5" cy="192.3" r="1.5" fill="#3a8ad6"/><path d="M134.5 186.5H135.7M136.9 186.5H144.5" stroke="#3a8ad6" stroke-width="1.3"/><path d="M134.5 189H135.7M136.9 189H144.5" stroke="#3a8ad6" stroke-width="1.3"/><path d="M134.5 191.5H135.7M136.9 191.5H144.5" stroke="#3a8ad6" stroke-width="1.3"/><path d="M134.5 194H135.7M136.9 194H144.5" stroke="#9a9da2" stroke-width="1.3"/><path d="M134.5 196.5H135.7M136.9 196.5H144.5" stroke="#9a9da2" stroke-width="1.3"/><path d="M134.5 199H135.7M136.9 199H144.5" stroke="#9a9da2" stroke-width="1.3"/><path d="M148.0 188V198" stroke="#3a8ad6" stroke-width="1.3"/><path d="M148.0 185.5L145.0 190H151.0Z" fill="#3a8ad6"/><path d="M156.3 190H162.8L159.55 193.8Z" fill="#111"/><path d="M175 186.5H176.2M177.4 186.5H185" stroke="#3a8ad6" stroke-width="1.3"/><path d="M175 189H176.2M177.4 189H185" stroke="#3a8ad6" stroke-width="1.3"/><path d="M175 191.5H176.2M177.4 191.5H185" stroke="#3a8ad6" stroke-width="1.3"/><path d="M175 194H176.2M177.4 194H185" stroke="#3a8ad6" stroke-width="1.3"/><path d="M175 196.5H176.2M177.4 196.5H185" stroke="#3a8ad6" stroke-width="1.3"/><path d="M175 199H176.2M177.4 199H185" stroke="#3a8ad6" stroke-width="1.3"/><path d="M188.5 186V196" stroke="#3a8ad6" stroke-width="1.3"/><path d="M188.5 199L185.5 194.5H191.5Z" fill="#3a8ad6"/><path d="M197.5 190H204.0L200.75 193.8Z" fill="#111"/><path d="M218 186.5H224.5" stroke="#9a9da2" stroke-width="1.3"/><path d="M226 186.5H229" stroke="#3a8ad6" stroke-width="1.3"/><path d="M218 189H224.5" stroke="#9a9da2" stroke-width="1.3"/><path d="M226 189H229" stroke="#3a8ad6" stroke-width="1.3"/><path d="M218 191.5H224.5" stroke="#9a9da2" stroke-width="1.3"/><path d="M226 191.5H229" stroke="#3a8ad6" stroke-width="1.3"/><path d="M218 194H224.5" stroke="#9a9da2" stroke-width="1.3"/><path d="M226 194H229" stroke="#3a8ad6" stroke-width="1.3"/><path d="M218 196.5H224.5" stroke="#9a9da2" stroke-width="1.3"/><path d="M226 196.5H229" stroke="#3a8ad6" stroke-width="1.3"/><path d="M218 199H224.5" stroke="#9a9da2" stroke-width="1.3"/><path d="M226 199H229" stroke="#3a8ad6" stroke-width="1.3"/><path d="M237.5 190H244.0L240.75 193.8Z" fill="#111"/><circle cx="810.5" cy="191.5" r="4.6" fill="none" stroke="#3a8ad6" stroke-width="1.5"/><path d="M814 195L818 199" stroke="#3a8ad6" stroke-width="2"/><path d="M808 191.5H813" stroke="#3a8ad6" stroke-width="1.3"/><path d="M810.5 189V194" stroke="#3a8ad6" stroke-width="1.3"/><circle cx="833.5" cy="191.5" r="4.6" fill="none" stroke="#3a8ad6" stroke-width="1.5"/><path d="M837 195L841 199" stroke="#3a8ad6" stroke-width="2"/><path d="M831 191.5H836" stroke="#3a8ad6" stroke-width="1.3"/><rect x="849.5" y="189.5" width="8" height="8" fill="none" stroke="#3a8ad6" stroke-width="1" stroke-dasharray="1.5 1"/><circle cx="858.5" cy="191.0" r="4.6" fill="none" stroke="#3a8ad6" stroke-width="1.5"/><path d="M862 194.5L866 198.5" stroke="#3a8ad6" stroke-width="2"/><path d="M856 191.0H861" stroke="#3a8ad6" stroke-width="1.3"/><path d="M858.5 188.5V193.5" stroke="#3a8ad6" stroke-width="1.3"/><path d="M872.5 190.5H879.0L875.75 194.3Z" fill="#111"/><rect x="891.5" y="184.5" width="14" height="14" fill="none" stroke="#5a5d62" stroke-width="1"/><path d="M898.5 187V196M894 191.5H903" stroke="#3a8ad6" stroke-width="1.1"/><path d="M898.5 185.5L896.5 188H900.5ZM898.5 197.5L896.5 195H900.5ZM892.5 191.5L895 189.5V193.5ZM904.5 191.5L902 189.5V193.5Z" fill="#3a8ad6"/><path d="M914.8 184.5V199" stroke="#c8cacd" stroke-width="1"/><path d="M929.5 197V186" stroke="#3a8ad6" stroke-width="1.2"/><path d="M929.5 184.5L927.5 187.5H931.5Z" fill="#3a8ad6"/><path d="M929.5 197L922 191.5" stroke="#4aa050" stroke-width="1.2"/><path d="M929.5 197L937 192.5" stroke="#c83a7a" stroke-width="1.2"/><path d="M937.5 191.5L934.5 191.8L936.5 194Z" fill="#c83a7a"/><path d="M944.7 190.5H951.2L947.95 194.3Z" fill="#111"/><path d="M964.5 185V198.5H977" fill="none" stroke="#4aa050" stroke-width="1"/><path d="M964.5 198.5H977" stroke="#c83a7a" stroke-width="1"/><text x="967" y="194" font-family="Liberation Sans" font-size="9.5" fill="#8a8d91">xy</text><path d="M987.5 185V198.5H1000" fill="none" stroke="#3a8ad6" stroke-width="1"/><path d="M987.5 198.5H1000" stroke="#4aa050" stroke-width="1"/><text x="990" y="194" font-family="Liberation Sans" font-size="9.5" fill="#8a8d91">yz</text><path d="M1010.5 185V198.5H1023" fill="none" stroke="#3a8ad6" stroke-width="1"/><path d="M1010.5 198.5H1023" stroke="#c83a7a" stroke-width="1"/><text x="1013" y="194" font-family="Liberation Sans" font-size="9.5" fill="#8a8d91">xz</text><path d="M1032.6 184.5V199" stroke="#c8cacd" stroke-width="1"/><path d="M1049 186.5A5.8 5.8 0 1 0 1054 190.5" fill="none" stroke="#3a8ad6" stroke-width="1.5"/><path d="M1047.5 184L1053.5 187L1048 190Z" fill="#3a8ad6"/><path d="M1061 190.5H1067.5L1064.25 194.3Z" fill="#111"/><path d="M1080.6 184.5V199" stroke="#c8cacd" stroke-width="1"/><rect x="1086.5" y="182.5" width="37" height="18.5" rx="2" fill="#a9d5fa" stroke="#5aa2de" stroke-width="1"/><path d="M1105.2 183V200.5" stroke="#5aa2de" stroke-width="1"/><path d="M1090 189.5H1093L1098 186V197L1093 193.5H1090Z" fill="#3a8ad6"/><path d="M1099.5 189.5Q1101.5 191.7 1099.5 194" fill="none" stroke="#fff" stroke-width="1"/><path d="M1110 190H1116.5L1113.25 193.8Z" fill="#111"/><path d="M1130.5 188.5L1133 186H1143.5V195.5L1141 198H1130.5Z" fill="#fff" stroke="#4a7ab8" stroke-width="1"/><rect x="1133" y="189" width="8" height="6" fill="#c8d8e8" stroke="#7a8a9a" stroke-width="0.6"/><path d="M1130.5 188.5H1141V198M1141 188.5L1143.5 186" fill="none" stroke="#4a7ab8" stroke-width="0.8"/><rect x="1150.5" y="182.5" width="19" height="18.5" rx="2" fill="#a9d5fa" stroke="#5aa2de" stroke-width="1"/><rect x="1153.5" y="185.5" width="13" height="12.5" fill="#d8e4f0" stroke="#6a6d72" stroke-width="1"/><rect x="1155.0" y="188.0" width="2.3" height="2.3" fill="#3a8ad6"/><rect x="1158.3" y="188.0" width="2.3" height="2.3" fill="#3a8ad6"/><rect x="1161.6" y="188.0" width="2.3" height="2.3" fill="#3a8ad6"/><rect x="1155.0" y="191.3" width="2.3" height="2.3" fill="#3a8ad6"/><rect x="1158.3" y="191.3" width="2.3" height="2.3" fill="#3a8ad6"/><rect x="1161.6" y="191.3" width="2.3" height="2.3" fill="#3a8ad6"/><rect x="1155.0" y="194.6" width="2.3" height="2.3" fill="#3a8ad6"/><rect x="1158.3" y="194.6" width="2.3" height="2.3" fill="#3a8ad6"/><rect x="1161.6" y="194.6" width="2.3" height="2.3" fill="#3a8ad6"/><rect x="1173.5" y="182.5" width="19" height="18.5" rx="2" fill="#a9d5fa" stroke="#5aa2de" stroke-width="1"/><rect x="1176.5" y="185.5" width="13" height="12.5" fill="#d8e4f0" stroke="#6a6d72" stroke-width="1"/><path d="M1183 196V189" stroke="#3a8ad6" stroke-width="1.1"/><path d="M1183 196L1178.5 193" stroke="#4aa050" stroke-width="1.1"/><path d="M1183 196L1188 193" stroke="#c83a7a" stroke-width="1.1"/><rect x="1196.5" y="182.5" width="19" height="18.5" rx="2" fill="#a9d5fa" stroke="#5aa2de" stroke-width="1"/><rect x="1199.5" y="185.5" width="13" height="12.5" fill="#d8e4f0" stroke="#6a6d72" stroke-width="1"/><rect x="1206" y="187" width="2.5" height="10" fill="url(#tbcb)"/><defs><linearGradient id="tbcb" x1="0" y1="0" x2="0" y2="1"><stop offset="0" stop-color="#a0a0a0"/><stop offset="0.5" stop-color="#f0a030"/><stop offset="1" stop-color="#e03a3a"/></linearGradient></defs><path d="M1221.7 184.5V199" stroke="#c8cacd" stroke-width="1"/><path d="M1234 190.5V188.5A3 3 0 0 1 1240 188.5V190.5" fill="none" stroke="#3a8ad6" stroke-width="1.5"/><rect x="1232" y="190.5" width="10.5" height="7.5" fill="#3a8ad6"/><path d="M1252.9 184.5V199" stroke="#c8cacd" stroke-width="1"/><circle cx="1267.5" cy="191.5" r="6.8" fill="#3a8ad6"/><circle cx="1267.5" cy="191.5" r="2.8" fill="#f8fafd"/><path d="M1267.5 184.7L1264 190M1274 189.5L1268 189M1271.5 197.5L1269 192M1261 193.5L1266 194.5M1262.5 186.5L1266.5 191" stroke="#f8fafd" stroke-width="1"/><path d="M1282.5 190.5H1289.0L1285.75 194.3Z" fill="#111"/><path d="M1301 188H1304.5L1306 186H1311.5L1313 188H1317V198H1301Z" fill="#3a8ad6"/><circle cx="1309" cy="192.8" r="3" fill="#f8fafd"/><circle cx="1309" cy="192.8" r="1.8" fill="#3a8ad6"/><rect x="1327.5" y="183.5" width="9" height="5" fill="#fff" stroke="#7a7d82" stroke-width="1"/><rect x="1324.5" y="188.5" width="15" height="7" rx="1.5" fill="#c0c4c8" stroke="#7a7d82" stroke-width="1"/><rect x="1327.5" y="193.5" width="9" height="6" fill="#fff" stroke="#7a7d82" stroke-width="1"/><circle cx="1893" cy="220" r="8.5" fill="#eef1f5"/><rect x="1885.5" y="213.5" width="15" height="12" rx="3.5" fill="#1f4a9a"/><rect x="1887.5" y="215.5" width="8" height="8" rx="1.5" fill="#e8dc70"/><path d="M1893 214.5H1898A2 2 0 0 1 1900 216.5V222.5A2 2 0 0 1 1898 224.5H1893Z" fill="#3a80d8" opacity="0.85"/></svg><div class="t " style="left:1233.0px;top:1053.7px;font-size:11px;line-height:11px;color:#1a1a1a;">2.05 GB | 2.49 GB</div>
</body></html>
